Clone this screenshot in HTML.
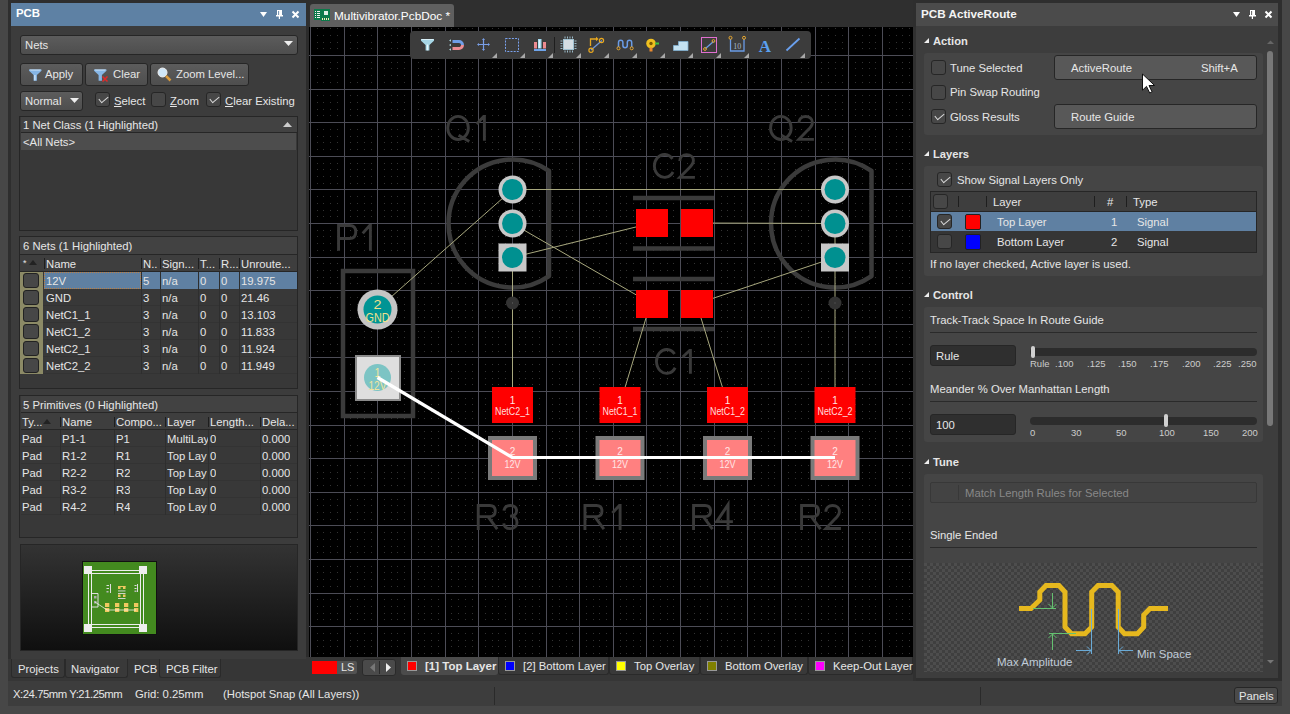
<!DOCTYPE html>
<html><head><meta charset="utf-8"><style>
*{margin:0;padding:0;box-sizing:border-box}
body{width:1290px;height:714px;overflow:hidden;background:#2e2e2e;font-family:"Liberation Sans",sans-serif;font-size:11.3px;color:#e6e6e6;position:relative}
.a{position:absolute;white-space:nowrap}
.btn{position:absolute;background:linear-gradient(#5c5c5c,#4e4e4e);border:1px solid #262626;border-radius:3px}
.cb{position:absolute;width:15px;height:15px;background:#474747;border:1px solid #262626;border-radius:3px}
.cb.on::after{content:"";position:absolute;left:3px;top:3px;width:8px;height:4px;border-left:1px solid #d8d8d8;border-bottom:1px solid #d8d8d8;transform:rotate(-40deg)}
.tbl{position:absolute;background:#383838;border:1px solid #262626}
.hdr{position:absolute;background:#414141;border-bottom:1px solid #262626}
.sep{position:absolute;width:1px;background:#222}
.row{position:absolute;left:0;right:0;height:17px;border-bottom:1px solid #333}
.tb{position:absolute;background:#3a3a3a;border:1px solid #262626;border-top:none}
</style></head><body>
<!-- outer frame -->
<div class="a" style="left:0;top:0;width:8px;height:714px;background:#474747"></div>
<div class="a" style="left:1282px;top:0;width:8px;height:714px;background:#474747"></div>
<div class="a" style="left:0;top:706px;width:1290px;height:8px;background:#474747"></div>

<!-- LEFT PANEL -->
<div class="a" style="left:11px;top:3px;width:295px;height:23px;background:#5e81a4"></div>
<div class="a" style="left:16px;top:6.5px;font-weight:bold;font-size:11.4px;color:#fff">PCB</div>
<svg class="a" style="left:255px;top:6px" width="50" height="16" viewBox="0 0 50 16">
 <path d="M5 6h7l-3.5 5z" fill="#fff"/>
 <path d="M22 4h5v5h1v1.5h-3v2.5h-1.2v-2.5h-2.8v-1.5h1zM23.2 5v4h0.9v-4z" fill="#fff" fill-rule="evenodd"/>
 <path d="M37.5 5.5l6 6M43.5 5.5l-6 6" stroke="#fff" stroke-width="2"/>
</svg>
<div class="a" style="left:8px;top:659px;width:908px;height:22px;background:#363636"></div>
<div class="a" style="left:11px;top:26px;width:295px;height:633px;background:#3c3c3c"></div>

<div class="btn" style="left:20px;top:35px;width:278px;height:20px"></div>
<div class="a" style="left:25px;top:39px">Nets</div>
<svg class="a" style="left:284px;top:41px" width="10" height="6"><path d="M0 0h9l-4.5 5z" fill="#eee"/></svg>

<div class="btn" style="left:20px;top:63px;width:63px;height:23px"></div>
<svg class="a" style="left:28px;top:68px" width="15" height="14"><path d="M1 1.5h12.5v1.3l-4.6 4.2v5.8h-3.3v-5.8l-4.6-4.2z" fill="#86b6e6"/><path d="M1.5 1.5h11.5l-1 1h-9.5z" fill="#cfe6fa"/><rect x="6.3" y="7" width="1.2" height="5.5" fill="#d8ecfb"/></svg>
<div class="a" style="left:45px;top:68px">Apply</div>
<div class="btn" style="left:85px;top:63px;width:63px;height:23px"></div>
<svg class="a" style="left:93px;top:68px" width="16" height="15"><path d="M1 1.5h12.5v1.3l-4.6 4.2v5.8h-3.3v-5.8l-4.6-4.2z" fill="#86b6e6"/><path d="M1.5 1.5h11.5l-1 1h-9.5z" fill="#cfe6fa"/><path d="M9.5 8.5l5 5M14.5 8.5l-5 5" stroke="#e02a2a" stroke-width="1.6"/></svg>
<div class="a" style="left:113px;top:68px">Clear</div>
<div class="btn" style="left:150px;top:63px;width:99px;height:23px"></div>
<svg class="a" style="left:157px;top:67px" width="15" height="15"><circle cx="5.5" cy="5.5" r="4.5" fill="#cfe6f7" stroke="#eee" stroke-width="1"/><path d="M9 9l4.5 4.5" stroke="#d89a3c" stroke-width="2.5"/></svg>
<div class="a" style="left:176px;top:68px">Zoom Level...</div>

<div class="btn" style="left:20px;top:91px;width:63px;height:20px"></div>
<div class="a" style="left:25px;top:95px">Normal</div>
<svg class="a" style="left:70px;top:98px" width="10" height="6"><path d="M0 0h9l-4.5 5z" fill="#eee"/></svg>
<div class="cb on" style="left:95px;top:92px"></div>
<div class="a" style="left:114px;top:95px"><u>S</u>elect</div>
<div class="cb" style="left:151px;top:92px"></div>
<div class="a" style="left:170px;top:95px"><u>Z</u>oom</div>
<div class="cb on" style="left:206px;top:92px"></div>
<div class="a" style="left:225px;top:95px"><u>C</u>lear Existing</div>

<!-- net class table -->
<div class="tbl" style="left:19px;top:116px;width:279px;height:115px"></div>
<div class="a" style="left:21px;top:117px;width:276px;height:16px;background:#424242;border-bottom:1px solid #262626"></div>
<div class="a" style="left:23px;top:119px">1 Net Class (1 Highlighted)</div>
<svg class="a" style="left:283px;top:122px" width="10" height="6"><path d="M0 5h9l-4.5-5z" fill="#ccc"/></svg>
<div class="a" style="left:21px;top:133px;width:275px;height:17px;background:#4d4d4d"></div>
<div class="a" style="left:23px;top:136px">&lt;All Nets&gt;</div>
<!-- nets table -->
<div class="tbl" style="left:19px;top:236px;width:279px;height:153px"></div>
<div class="a" style="left:20px;top:237px;width:277px;height:18px;background:#424242;border-bottom:1px solid #262626"></div>
<div class="a" style="left:23px;top:240px">6 Nets (1 Highlighted)</div>
<div class="a" style="left:20px;top:255px;width:277px;height:17px;background:#3e3e3e;border-bottom:1px solid #262626"></div>
<div class="sep" style="left:44px;top:258px;height:11px;background:#1e1e1e"></div>
<div class="sep" style="left:141px;top:258px;height:11px;background:#1e1e1e"></div>
<div class="sep" style="left:160px;top:258px;height:11px;background:#1e1e1e"></div>
<div class="sep" style="left:198px;top:258px;height:11px;background:#1e1e1e"></div>
<div class="sep" style="left:219px;top:258px;height:11px;background:#1e1e1e"></div>
<div class="sep" style="left:239px;top:258px;height:11px;background:#1e1e1e"></div>
<div class="a" style="left:23px;top:258px;font-size:9px">*</div>
<svg class="a" style="left:29px;top:260px" width="9" height="5"><path d="M0 5h8l-4-5z" fill="#222"/></svg>
<div class="a" style="left:46px;top:258px">Name</div>
<div class="a" style="left:143px;top:258px">N..</div>
<div class="a" style="left:162px;top:258px">Sign...</div>
<div class="a" style="left:200px;top:258px">T...</div>
<div class="a" style="left:221px;top:258px">R...</div>
<div class="a" style="left:241px;top:258px">Unroute...</div>
<div class="a" style="left:44px;top:272px;width:253px;height:17px;background:#5f80a2"></div>
<div class="a" style="left:44px;top:272px;width:97px;height:17px;border:1px dotted #c08040"></div>
<div class="a" style="left:20px;top:272px;width:23px;height:17px;background:#8c8a66"></div>
<div class="a" style="left:23px;top:273px;width:16px;height:15px;background:#474747;border:1px solid #222;border-radius:3px"></div>
<div class="a" style="left:46px;top:275px">12V</div>
<div class="a" style="left:143px;top:275px">5</div>
<div class="a" style="left:162px;top:275px">n/a</div>
<div class="a" style="left:200px;top:275px">0</div>
<div class="a" style="left:221px;top:275px">0</div>
<div class="a" style="left:241px;top:275px">19.975</div>
<div class="sep" style="left:141px;top:272px;height:17px;background:#2e2e2e"></div>
<div class="sep" style="left:160px;top:272px;height:17px;background:#2e2e2e"></div>
<div class="sep" style="left:198px;top:272px;height:17px;background:#2e2e2e"></div>
<div class="sep" style="left:219px;top:272px;height:17px;background:#2e2e2e"></div>
<div class="sep" style="left:239px;top:272px;height:17px;background:#2e2e2e"></div>
<div class="a" style="left:21px;top:305px;width:276px;height:1px;background:#333"></div>
<div class="a" style="left:20px;top:289px;width:23px;height:17px;background:#8c8a66"></div>
<div class="a" style="left:23px;top:290px;width:16px;height:15px;background:#474747;border:1px solid #222;border-radius:3px"></div>
<div class="a" style="left:46px;top:292px">GND</div>
<div class="a" style="left:143px;top:292px">3</div>
<div class="a" style="left:162px;top:292px">n/a</div>
<div class="a" style="left:200px;top:292px">0</div>
<div class="a" style="left:221px;top:292px">0</div>
<div class="a" style="left:241px;top:292px">21.46</div>
<div class="sep" style="left:141px;top:289px;height:17px;background:#2e2e2e"></div>
<div class="sep" style="left:160px;top:289px;height:17px;background:#2e2e2e"></div>
<div class="sep" style="left:198px;top:289px;height:17px;background:#2e2e2e"></div>
<div class="sep" style="left:219px;top:289px;height:17px;background:#2e2e2e"></div>
<div class="sep" style="left:239px;top:289px;height:17px;background:#2e2e2e"></div>
<div class="a" style="left:21px;top:322px;width:276px;height:1px;background:#333"></div>
<div class="a" style="left:20px;top:306px;width:23px;height:17px;background:#8c8a66"></div>
<div class="a" style="left:23px;top:307px;width:16px;height:15px;background:#474747;border:1px solid #222;border-radius:3px"></div>
<div class="a" style="left:46px;top:309px">NetC1_1</div>
<div class="a" style="left:143px;top:309px">3</div>
<div class="a" style="left:162px;top:309px">n/a</div>
<div class="a" style="left:200px;top:309px">0</div>
<div class="a" style="left:221px;top:309px">0</div>
<div class="a" style="left:241px;top:309px">13.103</div>
<div class="sep" style="left:141px;top:306px;height:17px;background:#2e2e2e"></div>
<div class="sep" style="left:160px;top:306px;height:17px;background:#2e2e2e"></div>
<div class="sep" style="left:198px;top:306px;height:17px;background:#2e2e2e"></div>
<div class="sep" style="left:219px;top:306px;height:17px;background:#2e2e2e"></div>
<div class="sep" style="left:239px;top:306px;height:17px;background:#2e2e2e"></div>
<div class="a" style="left:21px;top:339px;width:276px;height:1px;background:#333"></div>
<div class="a" style="left:20px;top:323px;width:23px;height:17px;background:#8c8a66"></div>
<div class="a" style="left:23px;top:324px;width:16px;height:15px;background:#474747;border:1px solid #222;border-radius:3px"></div>
<div class="a" style="left:46px;top:326px">NetC1_2</div>
<div class="a" style="left:143px;top:326px">3</div>
<div class="a" style="left:162px;top:326px">n/a</div>
<div class="a" style="left:200px;top:326px">0</div>
<div class="a" style="left:221px;top:326px">0</div>
<div class="a" style="left:241px;top:326px">11.833</div>
<div class="sep" style="left:141px;top:323px;height:17px;background:#2e2e2e"></div>
<div class="sep" style="left:160px;top:323px;height:17px;background:#2e2e2e"></div>
<div class="sep" style="left:198px;top:323px;height:17px;background:#2e2e2e"></div>
<div class="sep" style="left:219px;top:323px;height:17px;background:#2e2e2e"></div>
<div class="sep" style="left:239px;top:323px;height:17px;background:#2e2e2e"></div>
<div class="a" style="left:21px;top:356px;width:276px;height:1px;background:#333"></div>
<div class="a" style="left:20px;top:340px;width:23px;height:17px;background:#8c8a66"></div>
<div class="a" style="left:23px;top:341px;width:16px;height:15px;background:#474747;border:1px solid #222;border-radius:3px"></div>
<div class="a" style="left:46px;top:343px">NetC2_1</div>
<div class="a" style="left:143px;top:343px">3</div>
<div class="a" style="left:162px;top:343px">n/a</div>
<div class="a" style="left:200px;top:343px">0</div>
<div class="a" style="left:221px;top:343px">0</div>
<div class="a" style="left:241px;top:343px">11.924</div>
<div class="sep" style="left:141px;top:340px;height:17px;background:#2e2e2e"></div>
<div class="sep" style="left:160px;top:340px;height:17px;background:#2e2e2e"></div>
<div class="sep" style="left:198px;top:340px;height:17px;background:#2e2e2e"></div>
<div class="sep" style="left:219px;top:340px;height:17px;background:#2e2e2e"></div>
<div class="sep" style="left:239px;top:340px;height:17px;background:#2e2e2e"></div>
<div class="a" style="left:21px;top:373px;width:276px;height:1px;background:#333"></div>
<div class="a" style="left:20px;top:357px;width:23px;height:17px;background:#8c8a66"></div>
<div class="a" style="left:23px;top:358px;width:16px;height:15px;background:#474747;border:1px solid #222;border-radius:3px"></div>
<div class="a" style="left:46px;top:360px">NetC2_2</div>
<div class="a" style="left:143px;top:360px">3</div>
<div class="a" style="left:162px;top:360px">n/a</div>
<div class="a" style="left:200px;top:360px">0</div>
<div class="a" style="left:221px;top:360px">0</div>
<div class="a" style="left:241px;top:360px">11.949</div>
<div class="sep" style="left:141px;top:357px;height:17px;background:#2e2e2e"></div>
<div class="sep" style="left:160px;top:357px;height:17px;background:#2e2e2e"></div>
<div class="sep" style="left:198px;top:357px;height:17px;background:#2e2e2e"></div>
<div class="sep" style="left:219px;top:357px;height:17px;background:#2e2e2e"></div>
<div class="sep" style="left:239px;top:357px;height:17px;background:#2e2e2e"></div>
<!-- primitives table -->
<div class="tbl" style="left:19px;top:395px;width:279px;height:143px"></div>
<div class="a" style="left:21px;top:396px;width:276px;height:17px;background:#424242;border-bottom:1px solid #262626"></div>
<div class="a" style="left:23px;top:399px">5 Primitives (0 Highlighted)</div>
<div class="a" style="left:21px;top:413px;width:276px;height:17px;background:#3e3e3e;border-bottom:1px solid #262626"></div>
<div class="a" style="left:22px;top:416px">Ty...</div>
<div class="sep" style="left:60px;top:417px;height:10px;background:#1e1e1e"></div>
<div class="a" style="left:62px;top:416px">Name</div>
<div class="sep" style="left:114px;top:417px;height:10px;background:#1e1e1e"></div>
<div class="a" style="left:116px;top:416px">Compo...</div>
<div class="sep" style="left:165px;top:417px;height:10px;background:#1e1e1e"></div>
<div class="a" style="left:167px;top:416px">Layer</div>
<div class="sep" style="left:208px;top:417px;height:10px;background:#1e1e1e"></div>
<div class="a" style="left:210px;top:416px">Length...</div>
<div class="sep" style="left:260px;top:417px;height:10px;background:#1e1e1e"></div>
<div class="a" style="left:262px;top:416px">Dela...</div>
<svg class="a" style="left:43px;top:419px" width="9" height="5"><path d="M0 5h8l-4-5z" fill="#222"/></svg>
<div class="a" style="left:21px;top:446px;width:276px;height:1px;background:#333"></div>
<div class="a" style="left:22px;top:433px;overflow:hidden;max-width:60px">Pad</div>
<div class="a" style="left:62px;top:433px;overflow:hidden;max-width:60px">P1-1</div>
<div class="a" style="left:116px;top:433px;overflow:hidden;max-width:60px">P1</div>
<div class="a" style="left:167px;top:433px;overflow:hidden;max-width:45px">MultiLay</div>
<div class="a" style="left:210px;top:433px;overflow:hidden;max-width:60px">0</div>
<div class="a" style="left:262px;top:433px;overflow:hidden;max-width:60px">0.000</div>
<div class="sep" style="left:60px;top:430px;height:17px;background:#2e2e2e"></div>
<div class="sep" style="left:114px;top:430px;height:17px;background:#2e2e2e"></div>
<div class="sep" style="left:165px;top:430px;height:17px;background:#2e2e2e"></div>
<div class="sep" style="left:208px;top:430px;height:17px;background:#2e2e2e"></div>
<div class="sep" style="left:260px;top:430px;height:17px;background:#2e2e2e"></div>
<div class="a" style="left:21px;top:463px;width:276px;height:1px;background:#333"></div>
<div class="a" style="left:22px;top:450px;overflow:hidden;max-width:60px">Pad</div>
<div class="a" style="left:62px;top:450px;overflow:hidden;max-width:60px">R1-2</div>
<div class="a" style="left:116px;top:450px;overflow:hidden;max-width:60px">R1</div>
<div class="a" style="left:167px;top:450px;overflow:hidden;max-width:45px">Top Lay</div>
<div class="a" style="left:210px;top:450px;overflow:hidden;max-width:60px">0</div>
<div class="a" style="left:262px;top:450px;overflow:hidden;max-width:60px">0.000</div>
<div class="sep" style="left:60px;top:447px;height:17px;background:#2e2e2e"></div>
<div class="sep" style="left:114px;top:447px;height:17px;background:#2e2e2e"></div>
<div class="sep" style="left:165px;top:447px;height:17px;background:#2e2e2e"></div>
<div class="sep" style="left:208px;top:447px;height:17px;background:#2e2e2e"></div>
<div class="sep" style="left:260px;top:447px;height:17px;background:#2e2e2e"></div>
<div class="a" style="left:21px;top:480px;width:276px;height:1px;background:#333"></div>
<div class="a" style="left:22px;top:467px;overflow:hidden;max-width:60px">Pad</div>
<div class="a" style="left:62px;top:467px;overflow:hidden;max-width:60px">R2-2</div>
<div class="a" style="left:116px;top:467px;overflow:hidden;max-width:60px">R2</div>
<div class="a" style="left:167px;top:467px;overflow:hidden;max-width:45px">Top Lay</div>
<div class="a" style="left:210px;top:467px;overflow:hidden;max-width:60px">0</div>
<div class="a" style="left:262px;top:467px;overflow:hidden;max-width:60px">0.000</div>
<div class="sep" style="left:60px;top:464px;height:17px;background:#2e2e2e"></div>
<div class="sep" style="left:114px;top:464px;height:17px;background:#2e2e2e"></div>
<div class="sep" style="left:165px;top:464px;height:17px;background:#2e2e2e"></div>
<div class="sep" style="left:208px;top:464px;height:17px;background:#2e2e2e"></div>
<div class="sep" style="left:260px;top:464px;height:17px;background:#2e2e2e"></div>
<div class="a" style="left:21px;top:497px;width:276px;height:1px;background:#333"></div>
<div class="a" style="left:22px;top:484px;overflow:hidden;max-width:60px">Pad</div>
<div class="a" style="left:62px;top:484px;overflow:hidden;max-width:60px">R3-2</div>
<div class="a" style="left:116px;top:484px;overflow:hidden;max-width:60px">R3</div>
<div class="a" style="left:167px;top:484px;overflow:hidden;max-width:45px">Top Lay</div>
<div class="a" style="left:210px;top:484px;overflow:hidden;max-width:60px">0</div>
<div class="a" style="left:262px;top:484px;overflow:hidden;max-width:60px">0.000</div>
<div class="sep" style="left:60px;top:481px;height:17px;background:#2e2e2e"></div>
<div class="sep" style="left:114px;top:481px;height:17px;background:#2e2e2e"></div>
<div class="sep" style="left:165px;top:481px;height:17px;background:#2e2e2e"></div>
<div class="sep" style="left:208px;top:481px;height:17px;background:#2e2e2e"></div>
<div class="sep" style="left:260px;top:481px;height:17px;background:#2e2e2e"></div>
<div class="a" style="left:21px;top:514px;width:276px;height:1px;background:#333"></div>
<div class="a" style="left:22px;top:501px;overflow:hidden;max-width:60px">Pad</div>
<div class="a" style="left:62px;top:501px;overflow:hidden;max-width:60px">R4-2</div>
<div class="a" style="left:116px;top:501px;overflow:hidden;max-width:60px">R4</div>
<div class="a" style="left:167px;top:501px;overflow:hidden;max-width:45px">Top Lay</div>
<div class="a" style="left:210px;top:501px;overflow:hidden;max-width:60px">0</div>
<div class="a" style="left:262px;top:501px;overflow:hidden;max-width:60px">0.000</div>
<div class="sep" style="left:60px;top:498px;height:17px;background:#2e2e2e"></div>
<div class="sep" style="left:114px;top:498px;height:17px;background:#2e2e2e"></div>
<div class="sep" style="left:165px;top:498px;height:17px;background:#2e2e2e"></div>
<div class="sep" style="left:208px;top:498px;height:17px;background:#2e2e2e"></div>
<div class="sep" style="left:260px;top:498px;height:17px;background:#2e2e2e"></div>
<!-- navigator box -->
<div class="a" style="left:20px;top:544px;width:278px;height:107px;background:linear-gradient(#333,#0f0f0f);border:1px solid #262626"></div>
<svg class="a" style="left:82px;top:561px" width="75" height="74" viewBox="82 561 75 74">
 <rect x="82" y="561" width="75" height="74" fill="#111"/>
 <rect x="83" y="562" width="73" height="72" fill="#438a1f"/>
 <g fill="none" stroke="#eee" stroke-width="1">
  <path d="M92 570.5H139M92 573.5H139M92 624.5H139M92 627.5H139M88.5 574V624M91.5 574V624M140.5 574V624M143.5 574V624"/>
  <path d="M92 593.5h6v13.5h-6" stroke="#ddd"/>
 </g>
 <g fill="#eee"><rect x="84" y="566" width="8" height="8"/><rect x="139" y="566" width="8" height="8"/><rect x="84" y="624" width="8" height="8"/><rect x="139" y="624" width="8" height="8"/></g>
 <g fill="#aaa"><rect x="94" y="596" width="2.5" height="2.5"/><rect x="94" y="601" width="2.5" height="2.5"/></g>
 <g fill="#ddd"><rect x="110" y="584" width="1" height="9"/><rect x="106.5" y="585" width="2.5" height="1"/><rect x="106.5" y="588" width="2.5" height="1"/><rect x="106.5" y="591" width="2" height="1.5" fill="#bbb"/>
 <rect x="137" y="584" width="1" height="8"/><rect x="134.5" y="585" width="2" height="1"/><rect x="134.5" y="588" width="2" height="1"/><rect x="134.5" y="590.5" width="2" height="1.5" fill="#bbb"/>
 <rect x="118" y="590.5" width="7.5" height="0.9"/><rect x="118" y="593" width="7.5" height="0.9"/><rect x="118" y="598" width="7.5" height="0.9"/></g>
 <g fill="#f0c860"><rect x="118" y="586" width="7.5" height="1"/><rect x="118" y="586" width="2.5" height="3"/><rect x="123" y="586" width="2.5" height="3"/><rect x="118" y="594.5" width="2.5" height="2.5"/><rect x="123" y="594.5" width="2.5" height="2.5"/>
 <rect x="105" y="603" width="4.3" height="4"/><rect x="115" y="603" width="4.3" height="4"/><rect x="124" y="603" width="4.3" height="4"/><rect x="134" y="603" width="4.3" height="4"/>
 <rect x="105" y="608" width="4.3" height="4"/><rect x="115" y="608" width="4.3" height="4"/><rect x="124" y="608" width="4.3" height="4"/><rect x="134" y="608" width="4.3" height="4"/></g>
 <path d="M95 602L107 610H136" stroke="#fff" stroke-width="0.7" fill="none"/>
</svg>

<!-- panel tabs -->
<div class="a" style="left:11px;top:659px;width:54px;height:19px;background:#393939;border:1px solid #2a2a2a;border-top:none;border-radius:0 0 3px 3px"></div>
<div class="a" style="left:18px;top:663px">Projects</div>
<div class="a" style="left:65px;top:659px;width:63px;height:19px;background:#393939;border:1px solid #2a2a2a;border-top:none;border-radius:0 0 3px 3px"></div>
<div class="a" style="left:71px;top:663px">Navigator</div>
<div class="a" style="left:134px;top:663px">PCB</div>
<div class="a" style="left:159px;top:659px;width:62px;height:19px;background:#393939;border:1px solid #2a2a2a;border-top:none;border-radius:0 0 3px 3px"></div>
<div class="a" style="left:166px;top:663px">PCB Filter</div>

<!-- status bar -->
<div class="a" style="left:8px;top:681px;width:1274px;height:25px;background:#3d3d3d"></div>
<div class="a" style="left:13px;top:688px;letter-spacing:-0.45px">X:24.75mm Y:21.25mm</div>
<div class="a" style="left:135px;top:688px">Grid: 0.25mm</div>
<div class="a" style="left:223px;top:688px">(Hotspot Snap (All Layers))</div>
<div class="a" style="left:494px;top:687px;width:1px;height:18px;background:#2a2a2a"></div>
<div class="a" style="left:980px;top:687px;width:1px;height:18px;background:#2a2a2a"></div>
<div class="btn" style="left:1234px;top:687px;width:44px;height:17px;background:#4a4a4a"></div>
<div class="a" style="left:1239px;top:690px">Panels</div>

<!-- doc tab -->
<div class="a" style="left:309px;top:0;width:604px;height:27px;background:#2f2f2f"></div>
<div class="a" style="left:310px;top:4px;width:144px;height:23px;background:#5f5f5f;border-radius:3px 3px 0 0"></div>
<svg class="a" style="left:314px;top:9px" width="16" height="13"><rect width="16" height="11" fill="#0b7a4a"/><rect x="7" y="8" width="9" height="4" fill="#0b7a4a"/><g fill="#f2f2f2"><rect x="1" y="2" width="1" height="1"/><rect x="1" y="4" width="1" height="1"/><rect x="1" y="6" width="1" height="1"/><rect x="1" y="8" width="1" height="1"/><rect x="3" y="2" width="3" height="1"/><rect x="3" y="4" width="3" height="1"/><rect x="3" y="6" width="3" height="1"/><rect x="3" y="8" width="3" height="1"/></g><rect x="10" y="2" width="4" height="4" fill="#dfeee4"/><g fill="#f4f0b8"><rect x="8" y="9" width="1" height="2"/><rect x="10" y="9" width="1" height="2"/><rect x="12" y="9" width="1" height="2"/><rect x="14" y="9" width="1" height="2"/></g></svg>
<div class="a" style="left:334px;top:9px;font-size:11.8px;color:#fff">Multivibrator.PcbDoc *</div>
<!-- PCB canvas -->
<div class="a" style="left:306px;top:27px;width:3px;height:630px;background:#2b2b2b"></div>
<div class="a" style="left:913px;top:27px;width:3px;height:654px;background:#303030"></div>
<svg class="a" style="left:309px;top:27px;font-family:'Liberation Sans',sans-serif" width="604" height="630" viewBox="309 27 604 630">
<rect x="309" y="27" width="604" height="630" fill="#000"/>
<path d="M317 28h1m5 0h1m6 0h1m6 0h1m12 0h1m6 0h1m6 0h1m6 0h1m12 0h1m6 0h1m5 0h1m6 0h1m13 0h1m5 0h1m6 0h1m6 0h1m12 0h1m6 0h1m6 0h1m6 0h1m12 0h1m6 0h1m5 0h1m6 0h1m13 0h1m5 0h1m6 0h1m6 0h1m12 0h1m6 0h1m6 0h1m5 0h1m13 0h1m6 0h1m5 0h1m6 0h1m13 0h1m5 0h1m6 0h1m6 0h1m12 0h1m6 0h1m6 0h1m5 0h1m13 0h1m6 0h1m5 0h1m6 0h1m13 0h1m5 0h1m6 0h1m6 0h1m12 0h1m6 0h1m6 0h1m5 0h1m13 0h1m6 0h1m5 0h1m6 0h1m12 0h1m6 0h1m6 0h1m6 0h1m12 0h1m6 0h1m6 0h1m5 0h1m13 0h1m6 0h1m5 0h1m6 0h1M317 35h1m5 0h1m6 0h1m6 0h1m12 0h1m6 0h1m6 0h1m6 0h1m12 0h1m6 0h1m5 0h1m6 0h1m13 0h1m5 0h1m6 0h1m6 0h1m12 0h1m6 0h1m6 0h1m6 0h1m12 0h1m6 0h1m5 0h1m6 0h1m13 0h1m5 0h1m6 0h1m6 0h1m12 0h1m6 0h1m6 0h1m5 0h1m13 0h1m6 0h1m5 0h1m6 0h1m13 0h1m5 0h1m6 0h1m6 0h1m12 0h1m6 0h1m6 0h1m5 0h1m13 0h1m6 0h1m5 0h1m6 0h1m13 0h1m5 0h1m6 0h1m6 0h1m12 0h1m6 0h1m6 0h1m5 0h1m13 0h1m6 0h1m5 0h1m6 0h1m12 0h1m6 0h1m6 0h1m6 0h1m12 0h1m6 0h1m6 0h1m5 0h1m13 0h1m6 0h1m5 0h1m6 0h1M317 42h1m5 0h1m6 0h1m6 0h1m12 0h1m6 0h1m6 0h1m6 0h1m12 0h1m6 0h1m5 0h1m6 0h1m13 0h1m5 0h1m6 0h1m6 0h1m12 0h1m6 0h1m6 0h1m6 0h1m12 0h1m6 0h1m5 0h1m6 0h1m13 0h1m5 0h1m6 0h1m6 0h1m12 0h1m6 0h1m6 0h1m5 0h1m13 0h1m6 0h1m5 0h1m6 0h1m13 0h1m5 0h1m6 0h1m6 0h1m12 0h1m6 0h1m6 0h1m5 0h1m13 0h1m6 0h1m5 0h1m6 0h1m13 0h1m5 0h1m6 0h1m6 0h1m12 0h1m6 0h1m6 0h1m5 0h1m13 0h1m6 0h1m5 0h1m6 0h1m12 0h1m6 0h1m6 0h1m6 0h1m12 0h1m6 0h1m6 0h1m5 0h1m13 0h1m6 0h1m5 0h1m6 0h1M317 48h1m5 0h1m6 0h1m6 0h1m12 0h1m6 0h1m6 0h1m6 0h1m12 0h1m6 0h1m5 0h1m6 0h1m13 0h1m5 0h1m6 0h1m6 0h1m12 0h1m6 0h1m6 0h1m6 0h1m12 0h1m6 0h1m5 0h1m6 0h1m13 0h1m5 0h1m6 0h1m6 0h1m12 0h1m6 0h1m6 0h1m5 0h1m13 0h1m6 0h1m5 0h1m6 0h1m13 0h1m5 0h1m6 0h1m6 0h1m12 0h1m6 0h1m6 0h1m5 0h1m13 0h1m6 0h1m5 0h1m6 0h1m13 0h1m5 0h1m6 0h1m6 0h1m12 0h1m6 0h1m6 0h1m5 0h1m13 0h1m6 0h1m5 0h1m6 0h1m12 0h1m6 0h1m6 0h1m6 0h1m12 0h1m6 0h1m6 0h1m5 0h1m13 0h1m6 0h1m5 0h1m6 0h1M317 62h1m5 0h1m6 0h1m6 0h1m12 0h1m6 0h1m6 0h1m6 0h1m12 0h1m6 0h1m5 0h1m6 0h1m13 0h1m5 0h1m6 0h1m6 0h1m12 0h1m6 0h1m6 0h1m6 0h1m12 0h1m6 0h1m5 0h1m6 0h1m13 0h1m5 0h1m6 0h1m6 0h1m12 0h1m6 0h1m6 0h1m5 0h1m13 0h1m6 0h1m5 0h1m6 0h1m13 0h1m5 0h1m6 0h1m6 0h1m12 0h1m6 0h1m6 0h1m5 0h1m13 0h1m6 0h1m5 0h1m6 0h1m13 0h1m5 0h1m6 0h1m6 0h1m12 0h1m6 0h1m6 0h1m5 0h1m13 0h1m6 0h1m5 0h1m6 0h1m12 0h1m6 0h1m6 0h1m6 0h1m12 0h1m6 0h1m6 0h1m5 0h1m13 0h1m6 0h1m5 0h1m6 0h1M317 68h1m5 0h1m6 0h1m6 0h1m12 0h1m6 0h1m6 0h1m6 0h1m12 0h1m6 0h1m5 0h1m6 0h1m13 0h1m5 0h1m6 0h1m6 0h1m12 0h1m6 0h1m6 0h1m6 0h1m12 0h1m6 0h1m5 0h1m6 0h1m13 0h1m5 0h1m6 0h1m6 0h1m12 0h1m6 0h1m6 0h1m5 0h1m13 0h1m6 0h1m5 0h1m6 0h1m13 0h1m5 0h1m6 0h1m6 0h1m12 0h1m6 0h1m6 0h1m5 0h1m13 0h1m6 0h1m5 0h1m6 0h1m13 0h1m5 0h1m6 0h1m6 0h1m12 0h1m6 0h1m6 0h1m5 0h1m13 0h1m6 0h1m5 0h1m6 0h1m12 0h1m6 0h1m6 0h1m6 0h1m12 0h1m6 0h1m6 0h1m5 0h1m13 0h1m6 0h1m5 0h1m6 0h1M317 75h1m5 0h1m6 0h1m6 0h1m12 0h1m6 0h1m6 0h1m6 0h1m12 0h1m6 0h1m5 0h1m6 0h1m13 0h1m5 0h1m6 0h1m6 0h1m12 0h1m6 0h1m6 0h1m6 0h1m12 0h1m6 0h1m5 0h1m6 0h1m13 0h1m5 0h1m6 0h1m6 0h1m12 0h1m6 0h1m6 0h1m5 0h1m13 0h1m6 0h1m5 0h1m6 0h1m13 0h1m5 0h1m6 0h1m6 0h1m12 0h1m6 0h1m6 0h1m5 0h1m13 0h1m6 0h1m5 0h1m6 0h1m13 0h1m5 0h1m6 0h1m6 0h1m12 0h1m6 0h1m6 0h1m5 0h1m13 0h1m6 0h1m5 0h1m6 0h1m12 0h1m6 0h1m6 0h1m6 0h1m12 0h1m6 0h1m6 0h1m5 0h1m13 0h1m6 0h1m5 0h1m6 0h1M317 82h1m5 0h1m6 0h1m6 0h1m12 0h1m6 0h1m6 0h1m6 0h1m12 0h1m6 0h1m5 0h1m6 0h1m13 0h1m5 0h1m6 0h1m6 0h1m12 0h1m6 0h1m6 0h1m6 0h1m12 0h1m6 0h1m5 0h1m6 0h1m13 0h1m5 0h1m6 0h1m6 0h1m12 0h1m6 0h1m6 0h1m5 0h1m13 0h1m6 0h1m5 0h1m6 0h1m13 0h1m5 0h1m6 0h1m6 0h1m12 0h1m6 0h1m6 0h1m5 0h1m13 0h1m6 0h1m5 0h1m6 0h1m13 0h1m5 0h1m6 0h1m6 0h1m12 0h1m6 0h1m6 0h1m5 0h1m13 0h1m6 0h1m5 0h1m6 0h1m12 0h1m6 0h1m6 0h1m6 0h1m12 0h1m6 0h1m6 0h1m5 0h1m13 0h1m6 0h1m5 0h1m6 0h1M317 95h1m5 0h1m6 0h1m6 0h1m12 0h1m6 0h1m6 0h1m6 0h1m12 0h1m6 0h1m5 0h1m6 0h1m13 0h1m5 0h1m6 0h1m6 0h1m12 0h1m6 0h1m6 0h1m6 0h1m12 0h1m6 0h1m5 0h1m6 0h1m13 0h1m5 0h1m6 0h1m6 0h1m12 0h1m6 0h1m6 0h1m5 0h1m13 0h1m6 0h1m5 0h1m6 0h1m13 0h1m5 0h1m6 0h1m6 0h1m12 0h1m6 0h1m6 0h1m5 0h1m13 0h1m6 0h1m5 0h1m6 0h1m13 0h1m5 0h1m6 0h1m6 0h1m12 0h1m6 0h1m6 0h1m5 0h1m13 0h1m6 0h1m5 0h1m6 0h1m12 0h1m6 0h1m6 0h1m6 0h1m12 0h1m6 0h1m6 0h1m5 0h1m13 0h1m6 0h1m5 0h1m6 0h1M317 102h1m5 0h1m6 0h1m6 0h1m12 0h1m6 0h1m6 0h1m6 0h1m12 0h1m6 0h1m5 0h1m6 0h1m13 0h1m5 0h1m6 0h1m6 0h1m12 0h1m6 0h1m6 0h1m6 0h1m12 0h1m6 0h1m5 0h1m6 0h1m13 0h1m5 0h1m6 0h1m6 0h1m12 0h1m6 0h1m6 0h1m5 0h1m13 0h1m6 0h1m5 0h1m6 0h1m13 0h1m5 0h1m6 0h1m6 0h1m12 0h1m6 0h1m6 0h1m5 0h1m13 0h1m6 0h1m5 0h1m6 0h1m13 0h1m5 0h1m6 0h1m6 0h1m12 0h1m6 0h1m6 0h1m5 0h1m13 0h1m6 0h1m5 0h1m6 0h1m12 0h1m6 0h1m6 0h1m6 0h1m12 0h1m6 0h1m6 0h1m5 0h1m13 0h1m6 0h1m5 0h1m6 0h1M317 109h1m5 0h1m6 0h1m6 0h1m12 0h1m6 0h1m6 0h1m6 0h1m12 0h1m6 0h1m5 0h1m6 0h1m13 0h1m5 0h1m6 0h1m6 0h1m12 0h1m6 0h1m6 0h1m6 0h1m12 0h1m6 0h1m5 0h1m6 0h1m13 0h1m5 0h1m6 0h1m6 0h1m12 0h1m6 0h1m6 0h1m5 0h1m13 0h1m6 0h1m5 0h1m6 0h1m13 0h1m5 0h1m6 0h1m6 0h1m12 0h1m6 0h1m6 0h1m5 0h1m13 0h1m6 0h1m5 0h1m6 0h1m13 0h1m5 0h1m6 0h1m6 0h1m12 0h1m6 0h1m6 0h1m5 0h1m13 0h1m6 0h1m5 0h1m6 0h1m12 0h1m6 0h1m6 0h1m6 0h1m12 0h1m6 0h1m6 0h1m5 0h1m13 0h1m6 0h1m5 0h1m6 0h1M317 115h1m5 0h1m6 0h1m6 0h1m12 0h1m6 0h1m6 0h1m6 0h1m12 0h1m6 0h1m5 0h1m6 0h1m13 0h1m5 0h1m6 0h1m6 0h1m12 0h1m6 0h1m6 0h1m6 0h1m12 0h1m6 0h1m5 0h1m6 0h1m13 0h1m5 0h1m6 0h1m6 0h1m12 0h1m6 0h1m6 0h1m5 0h1m13 0h1m6 0h1m5 0h1m6 0h1m13 0h1m5 0h1m6 0h1m6 0h1m12 0h1m6 0h1m6 0h1m5 0h1m13 0h1m6 0h1m5 0h1m6 0h1m13 0h1m5 0h1m6 0h1m6 0h1m12 0h1m6 0h1m6 0h1m5 0h1m13 0h1m6 0h1m5 0h1m6 0h1m12 0h1m6 0h1m6 0h1m6 0h1m12 0h1m6 0h1m6 0h1m5 0h1m13 0h1m6 0h1m5 0h1m6 0h1M317 129h1m5 0h1m6 0h1m6 0h1m12 0h1m6 0h1m6 0h1m6 0h1m12 0h1m6 0h1m5 0h1m6 0h1m13 0h1m5 0h1m6 0h1m6 0h1m12 0h1m6 0h1m6 0h1m6 0h1m12 0h1m6 0h1m5 0h1m6 0h1m13 0h1m5 0h1m6 0h1m6 0h1m12 0h1m6 0h1m6 0h1m5 0h1m13 0h1m6 0h1m5 0h1m6 0h1m13 0h1m5 0h1m6 0h1m6 0h1m12 0h1m6 0h1m6 0h1m5 0h1m13 0h1m6 0h1m5 0h1m6 0h1m13 0h1m5 0h1m6 0h1m6 0h1m12 0h1m6 0h1m6 0h1m5 0h1m13 0h1m6 0h1m5 0h1m6 0h1m12 0h1m6 0h1m6 0h1m6 0h1m12 0h1m6 0h1m6 0h1m5 0h1m13 0h1m6 0h1m5 0h1m6 0h1M317 136h1m5 0h1m6 0h1m6 0h1m12 0h1m6 0h1m6 0h1m6 0h1m12 0h1m6 0h1m5 0h1m6 0h1m13 0h1m5 0h1m6 0h1m6 0h1m12 0h1m6 0h1m6 0h1m6 0h1m12 0h1m6 0h1m5 0h1m6 0h1m13 0h1m5 0h1m6 0h1m6 0h1m12 0h1m6 0h1m6 0h1m5 0h1m13 0h1m6 0h1m5 0h1m6 0h1m13 0h1m5 0h1m6 0h1m6 0h1m12 0h1m6 0h1m6 0h1m5 0h1m13 0h1m6 0h1m5 0h1m6 0h1m13 0h1m5 0h1m6 0h1m6 0h1m12 0h1m6 0h1m6 0h1m5 0h1m13 0h1m6 0h1m5 0h1m6 0h1m12 0h1m6 0h1m6 0h1m6 0h1m12 0h1m6 0h1m6 0h1m5 0h1m13 0h1m6 0h1m5 0h1m6 0h1M317 142h1m5 0h1m6 0h1m6 0h1m12 0h1m6 0h1m6 0h1m6 0h1m12 0h1m6 0h1m5 0h1m6 0h1m13 0h1m5 0h1m6 0h1m6 0h1m12 0h1m6 0h1m6 0h1m6 0h1m12 0h1m6 0h1m5 0h1m6 0h1m13 0h1m5 0h1m6 0h1m6 0h1m12 0h1m6 0h1m6 0h1m5 0h1m13 0h1m6 0h1m5 0h1m6 0h1m13 0h1m5 0h1m6 0h1m6 0h1m12 0h1m6 0h1m6 0h1m5 0h1m13 0h1m6 0h1m5 0h1m6 0h1m13 0h1m5 0h1m6 0h1m6 0h1m12 0h1m6 0h1m6 0h1m5 0h1m13 0h1m6 0h1m5 0h1m6 0h1m12 0h1m6 0h1m6 0h1m6 0h1m12 0h1m6 0h1m6 0h1m5 0h1m13 0h1m6 0h1m5 0h1m6 0h1M317 149h1m5 0h1m6 0h1m6 0h1m12 0h1m6 0h1m6 0h1m6 0h1m12 0h1m6 0h1m5 0h1m6 0h1m13 0h1m5 0h1m6 0h1m6 0h1m12 0h1m6 0h1m6 0h1m6 0h1m12 0h1m6 0h1m5 0h1m6 0h1m13 0h1m5 0h1m6 0h1m6 0h1m12 0h1m6 0h1m6 0h1m5 0h1m13 0h1m6 0h1m5 0h1m6 0h1m13 0h1m5 0h1m6 0h1m6 0h1m12 0h1m6 0h1m6 0h1m5 0h1m13 0h1m6 0h1m5 0h1m6 0h1m13 0h1m5 0h1m6 0h1m6 0h1m12 0h1m6 0h1m6 0h1m5 0h1m13 0h1m6 0h1m5 0h1m6 0h1m12 0h1m6 0h1m6 0h1m6 0h1m12 0h1m6 0h1m6 0h1m5 0h1m13 0h1m6 0h1m5 0h1m6 0h1M317 163h1m5 0h1m6 0h1m6 0h1m12 0h1m6 0h1m6 0h1m6 0h1m12 0h1m6 0h1m5 0h1m6 0h1m13 0h1m5 0h1m6 0h1m6 0h1m12 0h1m6 0h1m6 0h1m6 0h1m12 0h1m6 0h1m5 0h1m6 0h1m13 0h1m5 0h1m6 0h1m6 0h1m12 0h1m6 0h1m6 0h1m5 0h1m13 0h1m6 0h1m5 0h1m6 0h1m13 0h1m5 0h1m6 0h1m6 0h1m12 0h1m6 0h1m6 0h1m5 0h1m13 0h1m6 0h1m5 0h1m6 0h1m13 0h1m5 0h1m6 0h1m6 0h1m12 0h1m6 0h1m6 0h1m5 0h1m13 0h1m6 0h1m5 0h1m6 0h1m12 0h1m6 0h1m6 0h1m6 0h1m12 0h1m6 0h1m6 0h1m5 0h1m13 0h1m6 0h1m5 0h1m6 0h1M317 169h1m5 0h1m6 0h1m6 0h1m12 0h1m6 0h1m6 0h1m6 0h1m12 0h1m6 0h1m5 0h1m6 0h1m13 0h1m5 0h1m6 0h1m6 0h1m12 0h1m6 0h1m6 0h1m6 0h1m12 0h1m6 0h1m5 0h1m6 0h1m13 0h1m5 0h1m6 0h1m6 0h1m12 0h1m6 0h1m6 0h1m5 0h1m13 0h1m6 0h1m5 0h1m6 0h1m13 0h1m5 0h1m6 0h1m6 0h1m12 0h1m6 0h1m6 0h1m5 0h1m13 0h1m6 0h1m5 0h1m6 0h1m13 0h1m5 0h1m6 0h1m6 0h1m12 0h1m6 0h1m6 0h1m5 0h1m13 0h1m6 0h1m5 0h1m6 0h1m12 0h1m6 0h1m6 0h1m6 0h1m12 0h1m6 0h1m6 0h1m5 0h1m13 0h1m6 0h1m5 0h1m6 0h1M317 176h1m5 0h1m6 0h1m6 0h1m12 0h1m6 0h1m6 0h1m6 0h1m12 0h1m6 0h1m5 0h1m6 0h1m13 0h1m5 0h1m6 0h1m6 0h1m12 0h1m6 0h1m6 0h1m6 0h1m12 0h1m6 0h1m5 0h1m6 0h1m13 0h1m5 0h1m6 0h1m6 0h1m12 0h1m6 0h1m6 0h1m5 0h1m13 0h1m6 0h1m5 0h1m6 0h1m13 0h1m5 0h1m6 0h1m6 0h1m12 0h1m6 0h1m6 0h1m5 0h1m13 0h1m6 0h1m5 0h1m6 0h1m13 0h1m5 0h1m6 0h1m6 0h1m12 0h1m6 0h1m6 0h1m5 0h1m13 0h1m6 0h1m5 0h1m6 0h1m12 0h1m6 0h1m6 0h1m6 0h1m12 0h1m6 0h1m6 0h1m5 0h1m13 0h1m6 0h1m5 0h1m6 0h1M317 183h1m5 0h1m6 0h1m6 0h1m12 0h1m6 0h1m6 0h1m6 0h1m12 0h1m6 0h1m5 0h1m6 0h1m13 0h1m5 0h1m6 0h1m6 0h1m12 0h1m6 0h1m6 0h1m6 0h1m12 0h1m6 0h1m5 0h1m6 0h1m13 0h1m5 0h1m6 0h1m6 0h1m12 0h1m6 0h1m6 0h1m5 0h1m13 0h1m6 0h1m5 0h1m6 0h1m13 0h1m5 0h1m6 0h1m6 0h1m12 0h1m6 0h1m6 0h1m5 0h1m13 0h1m6 0h1m5 0h1m6 0h1m13 0h1m5 0h1m6 0h1m6 0h1m12 0h1m6 0h1m6 0h1m5 0h1m13 0h1m6 0h1m5 0h1m6 0h1m12 0h1m6 0h1m6 0h1m6 0h1m12 0h1m6 0h1m6 0h1m5 0h1m13 0h1m6 0h1m5 0h1m6 0h1M317 196h1m5 0h1m6 0h1m6 0h1m12 0h1m6 0h1m6 0h1m6 0h1m12 0h1m6 0h1m5 0h1m6 0h1m13 0h1m5 0h1m6 0h1m6 0h1m12 0h1m6 0h1m6 0h1m6 0h1m12 0h1m6 0h1m5 0h1m6 0h1m13 0h1m5 0h1m6 0h1m6 0h1m12 0h1m6 0h1m6 0h1m5 0h1m13 0h1m6 0h1m5 0h1m6 0h1m13 0h1m5 0h1m6 0h1m6 0h1m12 0h1m6 0h1m6 0h1m5 0h1m13 0h1m6 0h1m5 0h1m6 0h1m13 0h1m5 0h1m6 0h1m6 0h1m12 0h1m6 0h1m6 0h1m5 0h1m13 0h1m6 0h1m5 0h1m6 0h1m12 0h1m6 0h1m6 0h1m6 0h1m12 0h1m6 0h1m6 0h1m5 0h1m13 0h1m6 0h1m5 0h1m6 0h1M317 203h1m5 0h1m6 0h1m6 0h1m12 0h1m6 0h1m6 0h1m6 0h1m12 0h1m6 0h1m5 0h1m6 0h1m13 0h1m5 0h1m6 0h1m6 0h1m12 0h1m6 0h1m6 0h1m6 0h1m12 0h1m6 0h1m5 0h1m6 0h1m13 0h1m5 0h1m6 0h1m6 0h1m12 0h1m6 0h1m6 0h1m5 0h1m13 0h1m6 0h1m5 0h1m6 0h1m13 0h1m5 0h1m6 0h1m6 0h1m12 0h1m6 0h1m6 0h1m5 0h1m13 0h1m6 0h1m5 0h1m6 0h1m13 0h1m5 0h1m6 0h1m6 0h1m12 0h1m6 0h1m6 0h1m5 0h1m13 0h1m6 0h1m5 0h1m6 0h1m12 0h1m6 0h1m6 0h1m6 0h1m12 0h1m6 0h1m6 0h1m5 0h1m13 0h1m6 0h1m5 0h1m6 0h1M317 210h1m5 0h1m6 0h1m6 0h1m12 0h1m6 0h1m6 0h1m6 0h1m12 0h1m6 0h1m5 0h1m6 0h1m13 0h1m5 0h1m6 0h1m6 0h1m12 0h1m6 0h1m6 0h1m6 0h1m12 0h1m6 0h1m5 0h1m6 0h1m13 0h1m5 0h1m6 0h1m6 0h1m12 0h1m6 0h1m6 0h1m5 0h1m13 0h1m6 0h1m5 0h1m6 0h1m13 0h1m5 0h1m6 0h1m6 0h1m12 0h1m6 0h1m6 0h1m5 0h1m13 0h1m6 0h1m5 0h1m6 0h1m13 0h1m5 0h1m6 0h1m6 0h1m12 0h1m6 0h1m6 0h1m5 0h1m13 0h1m6 0h1m5 0h1m6 0h1m12 0h1m6 0h1m6 0h1m6 0h1m12 0h1m6 0h1m6 0h1m5 0h1m13 0h1m6 0h1m5 0h1m6 0h1M317 216h1m5 0h1m6 0h1m6 0h1m12 0h1m6 0h1m6 0h1m6 0h1m12 0h1m6 0h1m5 0h1m6 0h1m13 0h1m5 0h1m6 0h1m6 0h1m12 0h1m6 0h1m6 0h1m6 0h1m12 0h1m6 0h1m5 0h1m6 0h1m13 0h1m5 0h1m6 0h1m6 0h1m12 0h1m6 0h1m6 0h1m5 0h1m13 0h1m6 0h1m5 0h1m6 0h1m13 0h1m5 0h1m6 0h1m6 0h1m12 0h1m6 0h1m6 0h1m5 0h1m13 0h1m6 0h1m5 0h1m6 0h1m13 0h1m5 0h1m6 0h1m6 0h1m12 0h1m6 0h1m6 0h1m5 0h1m13 0h1m6 0h1m5 0h1m6 0h1m12 0h1m6 0h1m6 0h1m6 0h1m12 0h1m6 0h1m6 0h1m5 0h1m13 0h1m6 0h1m5 0h1m6 0h1M317 230h1m5 0h1m6 0h1m6 0h1m12 0h1m6 0h1m6 0h1m6 0h1m12 0h1m6 0h1m5 0h1m6 0h1m13 0h1m5 0h1m6 0h1m6 0h1m12 0h1m6 0h1m6 0h1m6 0h1m12 0h1m6 0h1m5 0h1m6 0h1m13 0h1m5 0h1m6 0h1m6 0h1m12 0h1m6 0h1m6 0h1m5 0h1m13 0h1m6 0h1m5 0h1m6 0h1m13 0h1m5 0h1m6 0h1m6 0h1m12 0h1m6 0h1m6 0h1m5 0h1m13 0h1m6 0h1m5 0h1m6 0h1m13 0h1m5 0h1m6 0h1m6 0h1m12 0h1m6 0h1m6 0h1m5 0h1m13 0h1m6 0h1m5 0h1m6 0h1m12 0h1m6 0h1m6 0h1m6 0h1m12 0h1m6 0h1m6 0h1m5 0h1m13 0h1m6 0h1m5 0h1m6 0h1M317 236h1m5 0h1m6 0h1m6 0h1m12 0h1m6 0h1m6 0h1m6 0h1m12 0h1m6 0h1m5 0h1m6 0h1m13 0h1m5 0h1m6 0h1m6 0h1m12 0h1m6 0h1m6 0h1m6 0h1m12 0h1m6 0h1m5 0h1m6 0h1m13 0h1m5 0h1m6 0h1m6 0h1m12 0h1m6 0h1m6 0h1m5 0h1m13 0h1m6 0h1m5 0h1m6 0h1m13 0h1m5 0h1m6 0h1m6 0h1m12 0h1m6 0h1m6 0h1m5 0h1m13 0h1m6 0h1m5 0h1m6 0h1m13 0h1m5 0h1m6 0h1m6 0h1m12 0h1m6 0h1m6 0h1m5 0h1m13 0h1m6 0h1m5 0h1m6 0h1m12 0h1m6 0h1m6 0h1m6 0h1m12 0h1m6 0h1m6 0h1m5 0h1m13 0h1m6 0h1m5 0h1m6 0h1M317 243h1m5 0h1m6 0h1m6 0h1m12 0h1m6 0h1m6 0h1m6 0h1m12 0h1m6 0h1m5 0h1m6 0h1m13 0h1m5 0h1m6 0h1m6 0h1m12 0h1m6 0h1m6 0h1m6 0h1m12 0h1m6 0h1m5 0h1m6 0h1m13 0h1m5 0h1m6 0h1m6 0h1m12 0h1m6 0h1m6 0h1m5 0h1m13 0h1m6 0h1m5 0h1m6 0h1m13 0h1m5 0h1m6 0h1m6 0h1m12 0h1m6 0h1m6 0h1m5 0h1m13 0h1m6 0h1m5 0h1m6 0h1m13 0h1m5 0h1m6 0h1m6 0h1m12 0h1m6 0h1m6 0h1m5 0h1m13 0h1m6 0h1m5 0h1m6 0h1m12 0h1m6 0h1m6 0h1m6 0h1m12 0h1m6 0h1m6 0h1m5 0h1m13 0h1m6 0h1m5 0h1m6 0h1M317 250h1m5 0h1m6 0h1m6 0h1m12 0h1m6 0h1m6 0h1m6 0h1m12 0h1m6 0h1m5 0h1m6 0h1m13 0h1m5 0h1m6 0h1m6 0h1m12 0h1m6 0h1m6 0h1m6 0h1m12 0h1m6 0h1m5 0h1m6 0h1m13 0h1m5 0h1m6 0h1m6 0h1m12 0h1m6 0h1m6 0h1m5 0h1m13 0h1m6 0h1m5 0h1m6 0h1m13 0h1m5 0h1m6 0h1m6 0h1m12 0h1m6 0h1m6 0h1m5 0h1m13 0h1m6 0h1m5 0h1m6 0h1m13 0h1m5 0h1m6 0h1m6 0h1m12 0h1m6 0h1m6 0h1m5 0h1m13 0h1m6 0h1m5 0h1m6 0h1m12 0h1m6 0h1m6 0h1m6 0h1m12 0h1m6 0h1m6 0h1m5 0h1m13 0h1m6 0h1m5 0h1m6 0h1M317 263h1m5 0h1m6 0h1m6 0h1m12 0h1m6 0h1m6 0h1m6 0h1m12 0h1m6 0h1m5 0h1m6 0h1m13 0h1m5 0h1m6 0h1m6 0h1m12 0h1m6 0h1m6 0h1m6 0h1m12 0h1m6 0h1m5 0h1m6 0h1m13 0h1m5 0h1m6 0h1m6 0h1m12 0h1m6 0h1m6 0h1m5 0h1m13 0h1m6 0h1m5 0h1m6 0h1m13 0h1m5 0h1m6 0h1m6 0h1m12 0h1m6 0h1m6 0h1m5 0h1m13 0h1m6 0h1m5 0h1m6 0h1m13 0h1m5 0h1m6 0h1m6 0h1m12 0h1m6 0h1m6 0h1m5 0h1m13 0h1m6 0h1m5 0h1m6 0h1m12 0h1m6 0h1m6 0h1m6 0h1m12 0h1m6 0h1m6 0h1m5 0h1m13 0h1m6 0h1m5 0h1m6 0h1M317 270h1m5 0h1m6 0h1m6 0h1m12 0h1m6 0h1m6 0h1m6 0h1m12 0h1m6 0h1m5 0h1m6 0h1m13 0h1m5 0h1m6 0h1m6 0h1m12 0h1m6 0h1m6 0h1m6 0h1m12 0h1m6 0h1m5 0h1m6 0h1m13 0h1m5 0h1m6 0h1m6 0h1m12 0h1m6 0h1m6 0h1m5 0h1m13 0h1m6 0h1m5 0h1m6 0h1m13 0h1m5 0h1m6 0h1m6 0h1m12 0h1m6 0h1m6 0h1m5 0h1m13 0h1m6 0h1m5 0h1m6 0h1m13 0h1m5 0h1m6 0h1m6 0h1m12 0h1m6 0h1m6 0h1m5 0h1m13 0h1m6 0h1m5 0h1m6 0h1m12 0h1m6 0h1m6 0h1m6 0h1m12 0h1m6 0h1m6 0h1m5 0h1m13 0h1m6 0h1m5 0h1m6 0h1M317 277h1m5 0h1m6 0h1m6 0h1m12 0h1m6 0h1m6 0h1m6 0h1m12 0h1m6 0h1m5 0h1m6 0h1m13 0h1m5 0h1m6 0h1m6 0h1m12 0h1m6 0h1m6 0h1m6 0h1m12 0h1m6 0h1m5 0h1m6 0h1m13 0h1m5 0h1m6 0h1m6 0h1m12 0h1m6 0h1m6 0h1m5 0h1m13 0h1m6 0h1m5 0h1m6 0h1m13 0h1m5 0h1m6 0h1m6 0h1m12 0h1m6 0h1m6 0h1m5 0h1m13 0h1m6 0h1m5 0h1m6 0h1m13 0h1m5 0h1m6 0h1m6 0h1m12 0h1m6 0h1m6 0h1m5 0h1m13 0h1m6 0h1m5 0h1m6 0h1m12 0h1m6 0h1m6 0h1m6 0h1m12 0h1m6 0h1m6 0h1m5 0h1m13 0h1m6 0h1m5 0h1m6 0h1M317 283h1m5 0h1m6 0h1m6 0h1m12 0h1m6 0h1m6 0h1m6 0h1m12 0h1m6 0h1m5 0h1m6 0h1m13 0h1m5 0h1m6 0h1m6 0h1m12 0h1m6 0h1m6 0h1m6 0h1m12 0h1m6 0h1m5 0h1m6 0h1m13 0h1m5 0h1m6 0h1m6 0h1m12 0h1m6 0h1m6 0h1m5 0h1m13 0h1m6 0h1m5 0h1m6 0h1m13 0h1m5 0h1m6 0h1m6 0h1m12 0h1m6 0h1m6 0h1m5 0h1m13 0h1m6 0h1m5 0h1m6 0h1m13 0h1m5 0h1m6 0h1m6 0h1m12 0h1m6 0h1m6 0h1m5 0h1m13 0h1m6 0h1m5 0h1m6 0h1m12 0h1m6 0h1m6 0h1m6 0h1m12 0h1m6 0h1m6 0h1m5 0h1m13 0h1m6 0h1m5 0h1m6 0h1M317 297h1m5 0h1m6 0h1m6 0h1m12 0h1m6 0h1m6 0h1m6 0h1m12 0h1m6 0h1m5 0h1m6 0h1m13 0h1m5 0h1m6 0h1m6 0h1m12 0h1m6 0h1m6 0h1m6 0h1m12 0h1m6 0h1m5 0h1m6 0h1m13 0h1m5 0h1m6 0h1m6 0h1m12 0h1m6 0h1m6 0h1m5 0h1m13 0h1m6 0h1m5 0h1m6 0h1m13 0h1m5 0h1m6 0h1m6 0h1m12 0h1m6 0h1m6 0h1m5 0h1m13 0h1m6 0h1m5 0h1m6 0h1m13 0h1m5 0h1m6 0h1m6 0h1m12 0h1m6 0h1m6 0h1m5 0h1m13 0h1m6 0h1m5 0h1m6 0h1m12 0h1m6 0h1m6 0h1m6 0h1m12 0h1m6 0h1m6 0h1m5 0h1m13 0h1m6 0h1m5 0h1m6 0h1M317 304h1m5 0h1m6 0h1m6 0h1m12 0h1m6 0h1m6 0h1m6 0h1m12 0h1m6 0h1m5 0h1m6 0h1m13 0h1m5 0h1m6 0h1m6 0h1m12 0h1m6 0h1m6 0h1m6 0h1m12 0h1m6 0h1m5 0h1m6 0h1m13 0h1m5 0h1m6 0h1m6 0h1m12 0h1m6 0h1m6 0h1m5 0h1m13 0h1m6 0h1m5 0h1m6 0h1m13 0h1m5 0h1m6 0h1m6 0h1m12 0h1m6 0h1m6 0h1m5 0h1m13 0h1m6 0h1m5 0h1m6 0h1m13 0h1m5 0h1m6 0h1m6 0h1m12 0h1m6 0h1m6 0h1m5 0h1m13 0h1m6 0h1m5 0h1m6 0h1m12 0h1m6 0h1m6 0h1m6 0h1m12 0h1m6 0h1m6 0h1m5 0h1m13 0h1m6 0h1m5 0h1m6 0h1M317 310h1m5 0h1m6 0h1m6 0h1m12 0h1m6 0h1m6 0h1m6 0h1m12 0h1m6 0h1m5 0h1m6 0h1m13 0h1m5 0h1m6 0h1m6 0h1m12 0h1m6 0h1m6 0h1m6 0h1m12 0h1m6 0h1m5 0h1m6 0h1m13 0h1m5 0h1m6 0h1m6 0h1m12 0h1m6 0h1m6 0h1m5 0h1m13 0h1m6 0h1m5 0h1m6 0h1m13 0h1m5 0h1m6 0h1m6 0h1m12 0h1m6 0h1m6 0h1m5 0h1m13 0h1m6 0h1m5 0h1m6 0h1m13 0h1m5 0h1m6 0h1m6 0h1m12 0h1m6 0h1m6 0h1m5 0h1m13 0h1m6 0h1m5 0h1m6 0h1m12 0h1m6 0h1m6 0h1m6 0h1m12 0h1m6 0h1m6 0h1m5 0h1m13 0h1m6 0h1m5 0h1m6 0h1M317 317h1m5 0h1m6 0h1m6 0h1m12 0h1m6 0h1m6 0h1m6 0h1m12 0h1m6 0h1m5 0h1m6 0h1m13 0h1m5 0h1m6 0h1m6 0h1m12 0h1m6 0h1m6 0h1m6 0h1m12 0h1m6 0h1m5 0h1m6 0h1m13 0h1m5 0h1m6 0h1m6 0h1m12 0h1m6 0h1m6 0h1m5 0h1m13 0h1m6 0h1m5 0h1m6 0h1m13 0h1m5 0h1m6 0h1m6 0h1m12 0h1m6 0h1m6 0h1m5 0h1m13 0h1m6 0h1m5 0h1m6 0h1m13 0h1m5 0h1m6 0h1m6 0h1m12 0h1m6 0h1m6 0h1m5 0h1m13 0h1m6 0h1m5 0h1m6 0h1m12 0h1m6 0h1m6 0h1m6 0h1m12 0h1m6 0h1m6 0h1m5 0h1m13 0h1m6 0h1m5 0h1m6 0h1M317 331h1m5 0h1m6 0h1m6 0h1m12 0h1m6 0h1m6 0h1m6 0h1m12 0h1m6 0h1m5 0h1m6 0h1m13 0h1m5 0h1m6 0h1m6 0h1m12 0h1m6 0h1m6 0h1m6 0h1m12 0h1m6 0h1m5 0h1m6 0h1m13 0h1m5 0h1m6 0h1m6 0h1m12 0h1m6 0h1m6 0h1m5 0h1m13 0h1m6 0h1m5 0h1m6 0h1m13 0h1m5 0h1m6 0h1m6 0h1m12 0h1m6 0h1m6 0h1m5 0h1m13 0h1m6 0h1m5 0h1m6 0h1m13 0h1m5 0h1m6 0h1m6 0h1m12 0h1m6 0h1m6 0h1m5 0h1m13 0h1m6 0h1m5 0h1m6 0h1m12 0h1m6 0h1m6 0h1m6 0h1m12 0h1m6 0h1m6 0h1m5 0h1m13 0h1m6 0h1m5 0h1m6 0h1M317 337h1m5 0h1m6 0h1m6 0h1m12 0h1m6 0h1m6 0h1m6 0h1m12 0h1m6 0h1m5 0h1m6 0h1m13 0h1m5 0h1m6 0h1m6 0h1m12 0h1m6 0h1m6 0h1m6 0h1m12 0h1m6 0h1m5 0h1m6 0h1m13 0h1m5 0h1m6 0h1m6 0h1m12 0h1m6 0h1m6 0h1m5 0h1m13 0h1m6 0h1m5 0h1m6 0h1m13 0h1m5 0h1m6 0h1m6 0h1m12 0h1m6 0h1m6 0h1m5 0h1m13 0h1m6 0h1m5 0h1m6 0h1m13 0h1m5 0h1m6 0h1m6 0h1m12 0h1m6 0h1m6 0h1m5 0h1m13 0h1m6 0h1m5 0h1m6 0h1m12 0h1m6 0h1m6 0h1m6 0h1m12 0h1m6 0h1m6 0h1m5 0h1m13 0h1m6 0h1m5 0h1m6 0h1M317 344h1m5 0h1m6 0h1m6 0h1m12 0h1m6 0h1m6 0h1m6 0h1m12 0h1m6 0h1m5 0h1m6 0h1m13 0h1m5 0h1m6 0h1m6 0h1m12 0h1m6 0h1m6 0h1m6 0h1m12 0h1m6 0h1m5 0h1m6 0h1m13 0h1m5 0h1m6 0h1m6 0h1m12 0h1m6 0h1m6 0h1m5 0h1m13 0h1m6 0h1m5 0h1m6 0h1m13 0h1m5 0h1m6 0h1m6 0h1m12 0h1m6 0h1m6 0h1m5 0h1m13 0h1m6 0h1m5 0h1m6 0h1m13 0h1m5 0h1m6 0h1m6 0h1m12 0h1m6 0h1m6 0h1m5 0h1m13 0h1m6 0h1m5 0h1m6 0h1m12 0h1m6 0h1m6 0h1m6 0h1m12 0h1m6 0h1m6 0h1m5 0h1m13 0h1m6 0h1m5 0h1m6 0h1M317 351h1m5 0h1m6 0h1m6 0h1m12 0h1m6 0h1m6 0h1m6 0h1m12 0h1m6 0h1m5 0h1m6 0h1m13 0h1m5 0h1m6 0h1m6 0h1m12 0h1m6 0h1m6 0h1m6 0h1m12 0h1m6 0h1m5 0h1m6 0h1m13 0h1m5 0h1m6 0h1m6 0h1m12 0h1m6 0h1m6 0h1m5 0h1m13 0h1m6 0h1m5 0h1m6 0h1m13 0h1m5 0h1m6 0h1m6 0h1m12 0h1m6 0h1m6 0h1m5 0h1m13 0h1m6 0h1m5 0h1m6 0h1m13 0h1m5 0h1m6 0h1m6 0h1m12 0h1m6 0h1m6 0h1m5 0h1m13 0h1m6 0h1m5 0h1m6 0h1m12 0h1m6 0h1m6 0h1m6 0h1m12 0h1m6 0h1m6 0h1m5 0h1m13 0h1m6 0h1m5 0h1m6 0h1M317 364h1m5 0h1m6 0h1m6 0h1m12 0h1m6 0h1m6 0h1m6 0h1m12 0h1m6 0h1m5 0h1m6 0h1m13 0h1m5 0h1m6 0h1m6 0h1m12 0h1m6 0h1m6 0h1m6 0h1m12 0h1m6 0h1m5 0h1m6 0h1m13 0h1m5 0h1m6 0h1m6 0h1m12 0h1m6 0h1m6 0h1m5 0h1m13 0h1m6 0h1m5 0h1m6 0h1m13 0h1m5 0h1m6 0h1m6 0h1m12 0h1m6 0h1m6 0h1m5 0h1m13 0h1m6 0h1m5 0h1m6 0h1m13 0h1m5 0h1m6 0h1m6 0h1m12 0h1m6 0h1m6 0h1m5 0h1m13 0h1m6 0h1m5 0h1m6 0h1m12 0h1m6 0h1m6 0h1m6 0h1m12 0h1m6 0h1m6 0h1m5 0h1m13 0h1m6 0h1m5 0h1m6 0h1M317 371h1m5 0h1m6 0h1m6 0h1m12 0h1m6 0h1m6 0h1m6 0h1m12 0h1m6 0h1m5 0h1m6 0h1m13 0h1m5 0h1m6 0h1m6 0h1m12 0h1m6 0h1m6 0h1m6 0h1m12 0h1m6 0h1m5 0h1m6 0h1m13 0h1m5 0h1m6 0h1m6 0h1m12 0h1m6 0h1m6 0h1m5 0h1m13 0h1m6 0h1m5 0h1m6 0h1m13 0h1m5 0h1m6 0h1m6 0h1m12 0h1m6 0h1m6 0h1m5 0h1m13 0h1m6 0h1m5 0h1m6 0h1m13 0h1m5 0h1m6 0h1m6 0h1m12 0h1m6 0h1m6 0h1m5 0h1m13 0h1m6 0h1m5 0h1m6 0h1m12 0h1m6 0h1m6 0h1m6 0h1m12 0h1m6 0h1m6 0h1m5 0h1m13 0h1m6 0h1m5 0h1m6 0h1M317 378h1m5 0h1m6 0h1m6 0h1m12 0h1m6 0h1m6 0h1m6 0h1m12 0h1m6 0h1m5 0h1m6 0h1m13 0h1m5 0h1m6 0h1m6 0h1m12 0h1m6 0h1m6 0h1m6 0h1m12 0h1m6 0h1m5 0h1m6 0h1m13 0h1m5 0h1m6 0h1m6 0h1m12 0h1m6 0h1m6 0h1m5 0h1m13 0h1m6 0h1m5 0h1m6 0h1m13 0h1m5 0h1m6 0h1m6 0h1m12 0h1m6 0h1m6 0h1m5 0h1m13 0h1m6 0h1m5 0h1m6 0h1m13 0h1m5 0h1m6 0h1m6 0h1m12 0h1m6 0h1m6 0h1m5 0h1m13 0h1m6 0h1m5 0h1m6 0h1m12 0h1m6 0h1m6 0h1m6 0h1m12 0h1m6 0h1m6 0h1m5 0h1m13 0h1m6 0h1m5 0h1m6 0h1M317 384h1m5 0h1m6 0h1m6 0h1m12 0h1m6 0h1m6 0h1m6 0h1m12 0h1m6 0h1m5 0h1m6 0h1m13 0h1m5 0h1m6 0h1m6 0h1m12 0h1m6 0h1m6 0h1m6 0h1m12 0h1m6 0h1m5 0h1m6 0h1m13 0h1m5 0h1m6 0h1m6 0h1m12 0h1m6 0h1m6 0h1m5 0h1m13 0h1m6 0h1m5 0h1m6 0h1m13 0h1m5 0h1m6 0h1m6 0h1m12 0h1m6 0h1m6 0h1m5 0h1m13 0h1m6 0h1m5 0h1m6 0h1m13 0h1m5 0h1m6 0h1m6 0h1m12 0h1m6 0h1m6 0h1m5 0h1m13 0h1m6 0h1m5 0h1m6 0h1m12 0h1m6 0h1m6 0h1m6 0h1m12 0h1m6 0h1m6 0h1m5 0h1m13 0h1m6 0h1m5 0h1m6 0h1M317 398h1m5 0h1m6 0h1m6 0h1m12 0h1m6 0h1m6 0h1m6 0h1m12 0h1m6 0h1m5 0h1m6 0h1m13 0h1m5 0h1m6 0h1m6 0h1m12 0h1m6 0h1m6 0h1m6 0h1m12 0h1m6 0h1m5 0h1m6 0h1m13 0h1m5 0h1m6 0h1m6 0h1m12 0h1m6 0h1m6 0h1m5 0h1m13 0h1m6 0h1m5 0h1m6 0h1m13 0h1m5 0h1m6 0h1m6 0h1m12 0h1m6 0h1m6 0h1m5 0h1m13 0h1m6 0h1m5 0h1m6 0h1m13 0h1m5 0h1m6 0h1m6 0h1m12 0h1m6 0h1m6 0h1m5 0h1m13 0h1m6 0h1m5 0h1m6 0h1m12 0h1m6 0h1m6 0h1m6 0h1m12 0h1m6 0h1m6 0h1m5 0h1m13 0h1m6 0h1m5 0h1m6 0h1M317 404h1m5 0h1m6 0h1m6 0h1m12 0h1m6 0h1m6 0h1m6 0h1m12 0h1m6 0h1m5 0h1m6 0h1m13 0h1m5 0h1m6 0h1m6 0h1m12 0h1m6 0h1m6 0h1m6 0h1m12 0h1m6 0h1m5 0h1m6 0h1m13 0h1m5 0h1m6 0h1m6 0h1m12 0h1m6 0h1m6 0h1m5 0h1m13 0h1m6 0h1m5 0h1m6 0h1m13 0h1m5 0h1m6 0h1m6 0h1m12 0h1m6 0h1m6 0h1m5 0h1m13 0h1m6 0h1m5 0h1m6 0h1m13 0h1m5 0h1m6 0h1m6 0h1m12 0h1m6 0h1m6 0h1m5 0h1m13 0h1m6 0h1m5 0h1m6 0h1m12 0h1m6 0h1m6 0h1m6 0h1m12 0h1m6 0h1m6 0h1m5 0h1m13 0h1m6 0h1m5 0h1m6 0h1M317 411h1m5 0h1m6 0h1m6 0h1m12 0h1m6 0h1m6 0h1m6 0h1m12 0h1m6 0h1m5 0h1m6 0h1m13 0h1m5 0h1m6 0h1m6 0h1m12 0h1m6 0h1m6 0h1m6 0h1m12 0h1m6 0h1m5 0h1m6 0h1m13 0h1m5 0h1m6 0h1m6 0h1m12 0h1m6 0h1m6 0h1m5 0h1m13 0h1m6 0h1m5 0h1m6 0h1m13 0h1m5 0h1m6 0h1m6 0h1m12 0h1m6 0h1m6 0h1m5 0h1m13 0h1m6 0h1m5 0h1m6 0h1m13 0h1m5 0h1m6 0h1m6 0h1m12 0h1m6 0h1m6 0h1m5 0h1m13 0h1m6 0h1m5 0h1m6 0h1m12 0h1m6 0h1m6 0h1m6 0h1m12 0h1m6 0h1m6 0h1m5 0h1m13 0h1m6 0h1m5 0h1m6 0h1M317 418h1m5 0h1m6 0h1m6 0h1m12 0h1m6 0h1m6 0h1m6 0h1m12 0h1m6 0h1m5 0h1m6 0h1m13 0h1m5 0h1m6 0h1m6 0h1m12 0h1m6 0h1m6 0h1m6 0h1m12 0h1m6 0h1m5 0h1m6 0h1m13 0h1m5 0h1m6 0h1m6 0h1m12 0h1m6 0h1m6 0h1m5 0h1m13 0h1m6 0h1m5 0h1m6 0h1m13 0h1m5 0h1m6 0h1m6 0h1m12 0h1m6 0h1m6 0h1m5 0h1m13 0h1m6 0h1m5 0h1m6 0h1m13 0h1m5 0h1m6 0h1m6 0h1m12 0h1m6 0h1m6 0h1m5 0h1m13 0h1m6 0h1m5 0h1m6 0h1m12 0h1m6 0h1m6 0h1m6 0h1m12 0h1m6 0h1m6 0h1m5 0h1m13 0h1m6 0h1m5 0h1m6 0h1M317 431h1m5 0h1m6 0h1m6 0h1m12 0h1m6 0h1m6 0h1m6 0h1m12 0h1m6 0h1m5 0h1m6 0h1m13 0h1m5 0h1m6 0h1m6 0h1m12 0h1m6 0h1m6 0h1m6 0h1m12 0h1m6 0h1m5 0h1m6 0h1m13 0h1m5 0h1m6 0h1m6 0h1m12 0h1m6 0h1m6 0h1m5 0h1m13 0h1m6 0h1m5 0h1m6 0h1m13 0h1m5 0h1m6 0h1m6 0h1m12 0h1m6 0h1m6 0h1m5 0h1m13 0h1m6 0h1m5 0h1m6 0h1m13 0h1m5 0h1m6 0h1m6 0h1m12 0h1m6 0h1m6 0h1m5 0h1m13 0h1m6 0h1m5 0h1m6 0h1m12 0h1m6 0h1m6 0h1m6 0h1m12 0h1m6 0h1m6 0h1m5 0h1m13 0h1m6 0h1m5 0h1m6 0h1M317 438h1m5 0h1m6 0h1m6 0h1m12 0h1m6 0h1m6 0h1m6 0h1m12 0h1m6 0h1m5 0h1m6 0h1m13 0h1m5 0h1m6 0h1m6 0h1m12 0h1m6 0h1m6 0h1m6 0h1m12 0h1m6 0h1m5 0h1m6 0h1m13 0h1m5 0h1m6 0h1m6 0h1m12 0h1m6 0h1m6 0h1m5 0h1m13 0h1m6 0h1m5 0h1m6 0h1m13 0h1m5 0h1m6 0h1m6 0h1m12 0h1m6 0h1m6 0h1m5 0h1m13 0h1m6 0h1m5 0h1m6 0h1m13 0h1m5 0h1m6 0h1m6 0h1m12 0h1m6 0h1m6 0h1m5 0h1m13 0h1m6 0h1m5 0h1m6 0h1m12 0h1m6 0h1m6 0h1m6 0h1m12 0h1m6 0h1m6 0h1m5 0h1m13 0h1m6 0h1m5 0h1m6 0h1M317 445h1m5 0h1m6 0h1m6 0h1m12 0h1m6 0h1m6 0h1m6 0h1m12 0h1m6 0h1m5 0h1m6 0h1m13 0h1m5 0h1m6 0h1m6 0h1m12 0h1m6 0h1m6 0h1m6 0h1m12 0h1m6 0h1m5 0h1m6 0h1m13 0h1m5 0h1m6 0h1m6 0h1m12 0h1m6 0h1m6 0h1m5 0h1m13 0h1m6 0h1m5 0h1m6 0h1m13 0h1m5 0h1m6 0h1m6 0h1m12 0h1m6 0h1m6 0h1m5 0h1m13 0h1m6 0h1m5 0h1m6 0h1m13 0h1m5 0h1m6 0h1m6 0h1m12 0h1m6 0h1m6 0h1m5 0h1m13 0h1m6 0h1m5 0h1m6 0h1m12 0h1m6 0h1m6 0h1m6 0h1m12 0h1m6 0h1m6 0h1m5 0h1m13 0h1m6 0h1m5 0h1m6 0h1M317 451h1m5 0h1m6 0h1m6 0h1m12 0h1m6 0h1m6 0h1m6 0h1m12 0h1m6 0h1m5 0h1m6 0h1m13 0h1m5 0h1m6 0h1m6 0h1m12 0h1m6 0h1m6 0h1m6 0h1m12 0h1m6 0h1m5 0h1m6 0h1m13 0h1m5 0h1m6 0h1m6 0h1m12 0h1m6 0h1m6 0h1m5 0h1m13 0h1m6 0h1m5 0h1m6 0h1m13 0h1m5 0h1m6 0h1m6 0h1m12 0h1m6 0h1m6 0h1m5 0h1m13 0h1m6 0h1m5 0h1m6 0h1m13 0h1m5 0h1m6 0h1m6 0h1m12 0h1m6 0h1m6 0h1m5 0h1m13 0h1m6 0h1m5 0h1m6 0h1m12 0h1m6 0h1m6 0h1m6 0h1m12 0h1m6 0h1m6 0h1m5 0h1m13 0h1m6 0h1m5 0h1m6 0h1M317 465h1m5 0h1m6 0h1m6 0h1m12 0h1m6 0h1m6 0h1m6 0h1m12 0h1m6 0h1m5 0h1m6 0h1m13 0h1m5 0h1m6 0h1m6 0h1m12 0h1m6 0h1m6 0h1m6 0h1m12 0h1m6 0h1m5 0h1m6 0h1m13 0h1m5 0h1m6 0h1m6 0h1m12 0h1m6 0h1m6 0h1m5 0h1m13 0h1m6 0h1m5 0h1m6 0h1m13 0h1m5 0h1m6 0h1m6 0h1m12 0h1m6 0h1m6 0h1m5 0h1m13 0h1m6 0h1m5 0h1m6 0h1m13 0h1m5 0h1m6 0h1m6 0h1m12 0h1m6 0h1m6 0h1m5 0h1m13 0h1m6 0h1m5 0h1m6 0h1m12 0h1m6 0h1m6 0h1m6 0h1m12 0h1m6 0h1m6 0h1m5 0h1m13 0h1m6 0h1m5 0h1m6 0h1M317 472h1m5 0h1m6 0h1m6 0h1m12 0h1m6 0h1m6 0h1m6 0h1m12 0h1m6 0h1m5 0h1m6 0h1m13 0h1m5 0h1m6 0h1m6 0h1m12 0h1m6 0h1m6 0h1m6 0h1m12 0h1m6 0h1m5 0h1m6 0h1m13 0h1m5 0h1m6 0h1m6 0h1m12 0h1m6 0h1m6 0h1m5 0h1m13 0h1m6 0h1m5 0h1m6 0h1m13 0h1m5 0h1m6 0h1m6 0h1m12 0h1m6 0h1m6 0h1m5 0h1m13 0h1m6 0h1m5 0h1m6 0h1m13 0h1m5 0h1m6 0h1m6 0h1m12 0h1m6 0h1m6 0h1m5 0h1m13 0h1m6 0h1m5 0h1m6 0h1m12 0h1m6 0h1m6 0h1m6 0h1m12 0h1m6 0h1m6 0h1m5 0h1m13 0h1m6 0h1m5 0h1m6 0h1M317 478h1m5 0h1m6 0h1m6 0h1m12 0h1m6 0h1m6 0h1m6 0h1m12 0h1m6 0h1m5 0h1m6 0h1m13 0h1m5 0h1m6 0h1m6 0h1m12 0h1m6 0h1m6 0h1m6 0h1m12 0h1m6 0h1m5 0h1m6 0h1m13 0h1m5 0h1m6 0h1m6 0h1m12 0h1m6 0h1m6 0h1m5 0h1m13 0h1m6 0h1m5 0h1m6 0h1m13 0h1m5 0h1m6 0h1m6 0h1m12 0h1m6 0h1m6 0h1m5 0h1m13 0h1m6 0h1m5 0h1m6 0h1m13 0h1m5 0h1m6 0h1m6 0h1m12 0h1m6 0h1m6 0h1m5 0h1m13 0h1m6 0h1m5 0h1m6 0h1m12 0h1m6 0h1m6 0h1m6 0h1m12 0h1m6 0h1m6 0h1m5 0h1m13 0h1m6 0h1m5 0h1m6 0h1M317 485h1m5 0h1m6 0h1m6 0h1m12 0h1m6 0h1m6 0h1m6 0h1m12 0h1m6 0h1m5 0h1m6 0h1m13 0h1m5 0h1m6 0h1m6 0h1m12 0h1m6 0h1m6 0h1m6 0h1m12 0h1m6 0h1m5 0h1m6 0h1m13 0h1m5 0h1m6 0h1m6 0h1m12 0h1m6 0h1m6 0h1m5 0h1m13 0h1m6 0h1m5 0h1m6 0h1m13 0h1m5 0h1m6 0h1m6 0h1m12 0h1m6 0h1m6 0h1m5 0h1m13 0h1m6 0h1m5 0h1m6 0h1m13 0h1m5 0h1m6 0h1m6 0h1m12 0h1m6 0h1m6 0h1m5 0h1m13 0h1m6 0h1m5 0h1m6 0h1m12 0h1m6 0h1m6 0h1m6 0h1m12 0h1m6 0h1m6 0h1m5 0h1m13 0h1m6 0h1m5 0h1m6 0h1M317 499h1m5 0h1m6 0h1m6 0h1m12 0h1m6 0h1m6 0h1m6 0h1m12 0h1m6 0h1m5 0h1m6 0h1m13 0h1m5 0h1m6 0h1m6 0h1m12 0h1m6 0h1m6 0h1m6 0h1m12 0h1m6 0h1m5 0h1m6 0h1m13 0h1m5 0h1m6 0h1m6 0h1m12 0h1m6 0h1m6 0h1m5 0h1m13 0h1m6 0h1m5 0h1m6 0h1m13 0h1m5 0h1m6 0h1m6 0h1m12 0h1m6 0h1m6 0h1m5 0h1m13 0h1m6 0h1m5 0h1m6 0h1m13 0h1m5 0h1m6 0h1m6 0h1m12 0h1m6 0h1m6 0h1m5 0h1m13 0h1m6 0h1m5 0h1m6 0h1m12 0h1m6 0h1m6 0h1m6 0h1m12 0h1m6 0h1m6 0h1m5 0h1m13 0h1m6 0h1m5 0h1m6 0h1M317 505h1m5 0h1m6 0h1m6 0h1m12 0h1m6 0h1m6 0h1m6 0h1m12 0h1m6 0h1m5 0h1m6 0h1m13 0h1m5 0h1m6 0h1m6 0h1m12 0h1m6 0h1m6 0h1m6 0h1m12 0h1m6 0h1m5 0h1m6 0h1m13 0h1m5 0h1m6 0h1m6 0h1m12 0h1m6 0h1m6 0h1m5 0h1m13 0h1m6 0h1m5 0h1m6 0h1m13 0h1m5 0h1m6 0h1m6 0h1m12 0h1m6 0h1m6 0h1m5 0h1m13 0h1m6 0h1m5 0h1m6 0h1m13 0h1m5 0h1m6 0h1m6 0h1m12 0h1m6 0h1m6 0h1m5 0h1m13 0h1m6 0h1m5 0h1m6 0h1m12 0h1m6 0h1m6 0h1m6 0h1m12 0h1m6 0h1m6 0h1m5 0h1m13 0h1m6 0h1m5 0h1m6 0h1M317 512h1m5 0h1m6 0h1m6 0h1m12 0h1m6 0h1m6 0h1m6 0h1m12 0h1m6 0h1m5 0h1m6 0h1m13 0h1m5 0h1m6 0h1m6 0h1m12 0h1m6 0h1m6 0h1m6 0h1m12 0h1m6 0h1m5 0h1m6 0h1m13 0h1m5 0h1m6 0h1m6 0h1m12 0h1m6 0h1m6 0h1m5 0h1m13 0h1m6 0h1m5 0h1m6 0h1m13 0h1m5 0h1m6 0h1m6 0h1m12 0h1m6 0h1m6 0h1m5 0h1m13 0h1m6 0h1m5 0h1m6 0h1m13 0h1m5 0h1m6 0h1m6 0h1m12 0h1m6 0h1m6 0h1m5 0h1m13 0h1m6 0h1m5 0h1m6 0h1m12 0h1m6 0h1m6 0h1m6 0h1m12 0h1m6 0h1m6 0h1m5 0h1m13 0h1m6 0h1m5 0h1m6 0h1M317 519h1m5 0h1m6 0h1m6 0h1m12 0h1m6 0h1m6 0h1m6 0h1m12 0h1m6 0h1m5 0h1m6 0h1m13 0h1m5 0h1m6 0h1m6 0h1m12 0h1m6 0h1m6 0h1m6 0h1m12 0h1m6 0h1m5 0h1m6 0h1m13 0h1m5 0h1m6 0h1m6 0h1m12 0h1m6 0h1m6 0h1m5 0h1m13 0h1m6 0h1m5 0h1m6 0h1m13 0h1m5 0h1m6 0h1m6 0h1m12 0h1m6 0h1m6 0h1m5 0h1m13 0h1m6 0h1m5 0h1m6 0h1m13 0h1m5 0h1m6 0h1m6 0h1m12 0h1m6 0h1m6 0h1m5 0h1m13 0h1m6 0h1m5 0h1m6 0h1m12 0h1m6 0h1m6 0h1m6 0h1m12 0h1m6 0h1m6 0h1m5 0h1m13 0h1m6 0h1m5 0h1m6 0h1M317 532h1m5 0h1m6 0h1m6 0h1m12 0h1m6 0h1m6 0h1m6 0h1m12 0h1m6 0h1m5 0h1m6 0h1m13 0h1m5 0h1m6 0h1m6 0h1m12 0h1m6 0h1m6 0h1m6 0h1m12 0h1m6 0h1m5 0h1m6 0h1m13 0h1m5 0h1m6 0h1m6 0h1m12 0h1m6 0h1m6 0h1m5 0h1m13 0h1m6 0h1m5 0h1m6 0h1m13 0h1m5 0h1m6 0h1m6 0h1m12 0h1m6 0h1m6 0h1m5 0h1m13 0h1m6 0h1m5 0h1m6 0h1m13 0h1m5 0h1m6 0h1m6 0h1m12 0h1m6 0h1m6 0h1m5 0h1m13 0h1m6 0h1m5 0h1m6 0h1m12 0h1m6 0h1m6 0h1m6 0h1m12 0h1m6 0h1m6 0h1m5 0h1m13 0h1m6 0h1m5 0h1m6 0h1M317 539h1m5 0h1m6 0h1m6 0h1m12 0h1m6 0h1m6 0h1m6 0h1m12 0h1m6 0h1m5 0h1m6 0h1m13 0h1m5 0h1m6 0h1m6 0h1m12 0h1m6 0h1m6 0h1m6 0h1m12 0h1m6 0h1m5 0h1m6 0h1m13 0h1m5 0h1m6 0h1m6 0h1m12 0h1m6 0h1m6 0h1m5 0h1m13 0h1m6 0h1m5 0h1m6 0h1m13 0h1m5 0h1m6 0h1m6 0h1m12 0h1m6 0h1m6 0h1m5 0h1m13 0h1m6 0h1m5 0h1m6 0h1m13 0h1m5 0h1m6 0h1m6 0h1m12 0h1m6 0h1m6 0h1m5 0h1m13 0h1m6 0h1m5 0h1m6 0h1m12 0h1m6 0h1m6 0h1m6 0h1m12 0h1m6 0h1m6 0h1m5 0h1m13 0h1m6 0h1m5 0h1m6 0h1M317 546h1m5 0h1m6 0h1m6 0h1m12 0h1m6 0h1m6 0h1m6 0h1m12 0h1m6 0h1m5 0h1m6 0h1m13 0h1m5 0h1m6 0h1m6 0h1m12 0h1m6 0h1m6 0h1m6 0h1m12 0h1m6 0h1m5 0h1m6 0h1m13 0h1m5 0h1m6 0h1m6 0h1m12 0h1m6 0h1m6 0h1m5 0h1m13 0h1m6 0h1m5 0h1m6 0h1m13 0h1m5 0h1m6 0h1m6 0h1m12 0h1m6 0h1m6 0h1m5 0h1m13 0h1m6 0h1m5 0h1m6 0h1m13 0h1m5 0h1m6 0h1m6 0h1m12 0h1m6 0h1m6 0h1m5 0h1m13 0h1m6 0h1m5 0h1m6 0h1m12 0h1m6 0h1m6 0h1m6 0h1m12 0h1m6 0h1m6 0h1m5 0h1m13 0h1m6 0h1m5 0h1m6 0h1M317 552h1m5 0h1m6 0h1m6 0h1m12 0h1m6 0h1m6 0h1m6 0h1m12 0h1m6 0h1m5 0h1m6 0h1m13 0h1m5 0h1m6 0h1m6 0h1m12 0h1m6 0h1m6 0h1m6 0h1m12 0h1m6 0h1m5 0h1m6 0h1m13 0h1m5 0h1m6 0h1m6 0h1m12 0h1m6 0h1m6 0h1m5 0h1m13 0h1m6 0h1m5 0h1m6 0h1m13 0h1m5 0h1m6 0h1m6 0h1m12 0h1m6 0h1m6 0h1m5 0h1m13 0h1m6 0h1m5 0h1m6 0h1m13 0h1m5 0h1m6 0h1m6 0h1m12 0h1m6 0h1m6 0h1m5 0h1m13 0h1m6 0h1m5 0h1m6 0h1m12 0h1m6 0h1m6 0h1m6 0h1m12 0h1m6 0h1m6 0h1m5 0h1m13 0h1m6 0h1m5 0h1m6 0h1M317 566h1m5 0h1m6 0h1m6 0h1m12 0h1m6 0h1m6 0h1m6 0h1m12 0h1m6 0h1m5 0h1m6 0h1m13 0h1m5 0h1m6 0h1m6 0h1m12 0h1m6 0h1m6 0h1m6 0h1m12 0h1m6 0h1m5 0h1m6 0h1m13 0h1m5 0h1m6 0h1m6 0h1m12 0h1m6 0h1m6 0h1m5 0h1m13 0h1m6 0h1m5 0h1m6 0h1m13 0h1m5 0h1m6 0h1m6 0h1m12 0h1m6 0h1m6 0h1m5 0h1m13 0h1m6 0h1m5 0h1m6 0h1m13 0h1m5 0h1m6 0h1m6 0h1m12 0h1m6 0h1m6 0h1m5 0h1m13 0h1m6 0h1m5 0h1m6 0h1m12 0h1m6 0h1m6 0h1m6 0h1m12 0h1m6 0h1m6 0h1m5 0h1m13 0h1m6 0h1m5 0h1m6 0h1M317 572h1m5 0h1m6 0h1m6 0h1m12 0h1m6 0h1m6 0h1m6 0h1m12 0h1m6 0h1m5 0h1m6 0h1m13 0h1m5 0h1m6 0h1m6 0h1m12 0h1m6 0h1m6 0h1m6 0h1m12 0h1m6 0h1m5 0h1m6 0h1m13 0h1m5 0h1m6 0h1m6 0h1m12 0h1m6 0h1m6 0h1m5 0h1m13 0h1m6 0h1m5 0h1m6 0h1m13 0h1m5 0h1m6 0h1m6 0h1m12 0h1m6 0h1m6 0h1m5 0h1m13 0h1m6 0h1m5 0h1m6 0h1m13 0h1m5 0h1m6 0h1m6 0h1m12 0h1m6 0h1m6 0h1m5 0h1m13 0h1m6 0h1m5 0h1m6 0h1m12 0h1m6 0h1m6 0h1m6 0h1m12 0h1m6 0h1m6 0h1m5 0h1m13 0h1m6 0h1m5 0h1m6 0h1M317 579h1m5 0h1m6 0h1m6 0h1m12 0h1m6 0h1m6 0h1m6 0h1m12 0h1m6 0h1m5 0h1m6 0h1m13 0h1m5 0h1m6 0h1m6 0h1m12 0h1m6 0h1m6 0h1m6 0h1m12 0h1m6 0h1m5 0h1m6 0h1m13 0h1m5 0h1m6 0h1m6 0h1m12 0h1m6 0h1m6 0h1m5 0h1m13 0h1m6 0h1m5 0h1m6 0h1m13 0h1m5 0h1m6 0h1m6 0h1m12 0h1m6 0h1m6 0h1m5 0h1m13 0h1m6 0h1m5 0h1m6 0h1m13 0h1m5 0h1m6 0h1m6 0h1m12 0h1m6 0h1m6 0h1m5 0h1m13 0h1m6 0h1m5 0h1m6 0h1m12 0h1m6 0h1m6 0h1m6 0h1m12 0h1m6 0h1m6 0h1m5 0h1m13 0h1m6 0h1m5 0h1m6 0h1M317 586h1m5 0h1m6 0h1m6 0h1m12 0h1m6 0h1m6 0h1m6 0h1m12 0h1m6 0h1m5 0h1m6 0h1m13 0h1m5 0h1m6 0h1m6 0h1m12 0h1m6 0h1m6 0h1m6 0h1m12 0h1m6 0h1m5 0h1m6 0h1m13 0h1m5 0h1m6 0h1m6 0h1m12 0h1m6 0h1m6 0h1m5 0h1m13 0h1m6 0h1m5 0h1m6 0h1m13 0h1m5 0h1m6 0h1m6 0h1m12 0h1m6 0h1m6 0h1m5 0h1m13 0h1m6 0h1m5 0h1m6 0h1m13 0h1m5 0h1m6 0h1m6 0h1m12 0h1m6 0h1m6 0h1m5 0h1m13 0h1m6 0h1m5 0h1m6 0h1m12 0h1m6 0h1m6 0h1m6 0h1m12 0h1m6 0h1m6 0h1m5 0h1m13 0h1m6 0h1m5 0h1m6 0h1M317 599h1m5 0h1m6 0h1m6 0h1m12 0h1m6 0h1m6 0h1m6 0h1m12 0h1m6 0h1m5 0h1m6 0h1m13 0h1m5 0h1m6 0h1m6 0h1m12 0h1m6 0h1m6 0h1m6 0h1m12 0h1m6 0h1m5 0h1m6 0h1m13 0h1m5 0h1m6 0h1m6 0h1m12 0h1m6 0h1m6 0h1m5 0h1m13 0h1m6 0h1m5 0h1m6 0h1m13 0h1m5 0h1m6 0h1m6 0h1m12 0h1m6 0h1m6 0h1m5 0h1m13 0h1m6 0h1m5 0h1m6 0h1m13 0h1m5 0h1m6 0h1m6 0h1m12 0h1m6 0h1m6 0h1m5 0h1m13 0h1m6 0h1m5 0h1m6 0h1m12 0h1m6 0h1m6 0h1m6 0h1m12 0h1m6 0h1m6 0h1m5 0h1m13 0h1m6 0h1m5 0h1m6 0h1M317 606h1m5 0h1m6 0h1m6 0h1m12 0h1m6 0h1m6 0h1m6 0h1m12 0h1m6 0h1m5 0h1m6 0h1m13 0h1m5 0h1m6 0h1m6 0h1m12 0h1m6 0h1m6 0h1m6 0h1m12 0h1m6 0h1m5 0h1m6 0h1m13 0h1m5 0h1m6 0h1m6 0h1m12 0h1m6 0h1m6 0h1m5 0h1m13 0h1m6 0h1m5 0h1m6 0h1m13 0h1m5 0h1m6 0h1m6 0h1m12 0h1m6 0h1m6 0h1m5 0h1m13 0h1m6 0h1m5 0h1m6 0h1m13 0h1m5 0h1m6 0h1m6 0h1m12 0h1m6 0h1m6 0h1m5 0h1m13 0h1m6 0h1m5 0h1m6 0h1m12 0h1m6 0h1m6 0h1m6 0h1m12 0h1m6 0h1m6 0h1m5 0h1m13 0h1m6 0h1m5 0h1m6 0h1M317 613h1m5 0h1m6 0h1m6 0h1m12 0h1m6 0h1m6 0h1m6 0h1m12 0h1m6 0h1m5 0h1m6 0h1m13 0h1m5 0h1m6 0h1m6 0h1m12 0h1m6 0h1m6 0h1m6 0h1m12 0h1m6 0h1m5 0h1m6 0h1m13 0h1m5 0h1m6 0h1m6 0h1m12 0h1m6 0h1m6 0h1m5 0h1m13 0h1m6 0h1m5 0h1m6 0h1m13 0h1m5 0h1m6 0h1m6 0h1m12 0h1m6 0h1m6 0h1m5 0h1m13 0h1m6 0h1m5 0h1m6 0h1m13 0h1m5 0h1m6 0h1m6 0h1m12 0h1m6 0h1m6 0h1m5 0h1m13 0h1m6 0h1m5 0h1m6 0h1m12 0h1m6 0h1m6 0h1m6 0h1m12 0h1m6 0h1m6 0h1m5 0h1m13 0h1m6 0h1m5 0h1m6 0h1M317 619h1m5 0h1m6 0h1m6 0h1m12 0h1m6 0h1m6 0h1m6 0h1m12 0h1m6 0h1m5 0h1m6 0h1m13 0h1m5 0h1m6 0h1m6 0h1m12 0h1m6 0h1m6 0h1m6 0h1m12 0h1m6 0h1m5 0h1m6 0h1m13 0h1m5 0h1m6 0h1m6 0h1m12 0h1m6 0h1m6 0h1m5 0h1m13 0h1m6 0h1m5 0h1m6 0h1m13 0h1m5 0h1m6 0h1m6 0h1m12 0h1m6 0h1m6 0h1m5 0h1m13 0h1m6 0h1m5 0h1m6 0h1m13 0h1m5 0h1m6 0h1m6 0h1m12 0h1m6 0h1m6 0h1m5 0h1m13 0h1m6 0h1m5 0h1m6 0h1m12 0h1m6 0h1m6 0h1m6 0h1m12 0h1m6 0h1m6 0h1m5 0h1m13 0h1m6 0h1m5 0h1m6 0h1M317 633h1m5 0h1m6 0h1m6 0h1m12 0h1m6 0h1m6 0h1m6 0h1m12 0h1m6 0h1m5 0h1m6 0h1m13 0h1m5 0h1m6 0h1m6 0h1m12 0h1m6 0h1m6 0h1m6 0h1m12 0h1m6 0h1m5 0h1m6 0h1m13 0h1m5 0h1m6 0h1m6 0h1m12 0h1m6 0h1m6 0h1m5 0h1m13 0h1m6 0h1m5 0h1m6 0h1m13 0h1m5 0h1m6 0h1m6 0h1m12 0h1m6 0h1m6 0h1m5 0h1m13 0h1m6 0h1m5 0h1m6 0h1m13 0h1m5 0h1m6 0h1m6 0h1m12 0h1m6 0h1m6 0h1m5 0h1m13 0h1m6 0h1m5 0h1m6 0h1m12 0h1m6 0h1m6 0h1m6 0h1m12 0h1m6 0h1m6 0h1m5 0h1m13 0h1m6 0h1m5 0h1m6 0h1M317 640h1m5 0h1m6 0h1m6 0h1m12 0h1m6 0h1m6 0h1m6 0h1m12 0h1m6 0h1m5 0h1m6 0h1m13 0h1m5 0h1m6 0h1m6 0h1m12 0h1m6 0h1m6 0h1m6 0h1m12 0h1m6 0h1m5 0h1m6 0h1m13 0h1m5 0h1m6 0h1m6 0h1m12 0h1m6 0h1m6 0h1m5 0h1m13 0h1m6 0h1m5 0h1m6 0h1m13 0h1m5 0h1m6 0h1m6 0h1m12 0h1m6 0h1m6 0h1m5 0h1m13 0h1m6 0h1m5 0h1m6 0h1m13 0h1m5 0h1m6 0h1m6 0h1m12 0h1m6 0h1m6 0h1m5 0h1m13 0h1m6 0h1m5 0h1m6 0h1m12 0h1m6 0h1m6 0h1m6 0h1m12 0h1m6 0h1m6 0h1m5 0h1m13 0h1m6 0h1m5 0h1m6 0h1M317 646h1m5 0h1m6 0h1m6 0h1m12 0h1m6 0h1m6 0h1m6 0h1m12 0h1m6 0h1m5 0h1m6 0h1m13 0h1m5 0h1m6 0h1m6 0h1m12 0h1m6 0h1m6 0h1m6 0h1m12 0h1m6 0h1m5 0h1m6 0h1m13 0h1m5 0h1m6 0h1m6 0h1m12 0h1m6 0h1m6 0h1m5 0h1m13 0h1m6 0h1m5 0h1m6 0h1m13 0h1m5 0h1m6 0h1m6 0h1m12 0h1m6 0h1m6 0h1m5 0h1m13 0h1m6 0h1m5 0h1m6 0h1m13 0h1m5 0h1m6 0h1m6 0h1m12 0h1m6 0h1m6 0h1m5 0h1m13 0h1m6 0h1m5 0h1m6 0h1m12 0h1m6 0h1m6 0h1m6 0h1m12 0h1m6 0h1m6 0h1m5 0h1m13 0h1m6 0h1m5 0h1m6 0h1M317 653h1m5 0h1m6 0h1m6 0h1m12 0h1m6 0h1m6 0h1m6 0h1m12 0h1m6 0h1m5 0h1m6 0h1m13 0h1m5 0h1m6 0h1m6 0h1m12 0h1m6 0h1m6 0h1m6 0h1m12 0h1m6 0h1m5 0h1m6 0h1m13 0h1m5 0h1m6 0h1m6 0h1m12 0h1m6 0h1m6 0h1m5 0h1m13 0h1m6 0h1m5 0h1m6 0h1m13 0h1m5 0h1m6 0h1m6 0h1m12 0h1m6 0h1m6 0h1m5 0h1m13 0h1m6 0h1m5 0h1m6 0h1m13 0h1m5 0h1m6 0h1m6 0h1m12 0h1m6 0h1m6 0h1m5 0h1m13 0h1m6 0h1m5 0h1m6 0h1m12 0h1m6 0h1m6 0h1m6 0h1m12 0h1m6 0h1m6 0h1m5 0h1m13 0h1m6 0h1m5 0h1m6 0h1" stroke="#333" stroke-width="1" transform="translate(0 0.5)" shape-rendering="crispEdges"/>
<path d="M310.5 27V657 M344.5 27V657 M377.5 27V657 M411.5 27V657 M445.5 27V657 M478.5 27V657 M512.5 27V657 M546.5 27V657 M579.5 27V657 M613.5 27V657 M646.5 27V657 M680.5 27V657 M714.5 27V657 M747.5 27V657 M781.5 27V657 M815.5 27V657 M848.5 27V657 M882.5 27V657 M309 55.5H913 M309 89.5H913 M309 122.5H913 M309 156.5H913 M309 189.5H913 M309 223.5H913 M309 257.5H913 M309 290.5H913 M309 324.5H913 M309 357.5H913 M309 391.5H913 M309 425.5H913 M309 458.5H913 M309 492.5H913 M309 525.5H913 M309 559.5H913 M309 593.5H913 M309 626.5H913" stroke="#4c4c56" stroke-width="1" fill="none"/>
<path d="M468.35 127.90A10.3 11.55 0 1 0 447.75 127.90A10.3 11.55 0 1 0 468.35 127.90M458.60 135.30 L469.30 141.60 M484.40 115.00 V140.80 M483.90 116.20 L476.70 124.00 M791.15 127.90A10.3 11.55 0 1 0 770.55 127.90A10.3 11.55 0 1 0 791.15 127.90M781.40 135.30 L792.10 141.60 M798.80 122.80 C799.00 118.60 801.90 116.45 805.60 116.45 C809.50 116.45 812.40 118.90 812.40 122.40 C812.40 125.60 810.50 127.60 807.90 130.10 L798.90 139.35 H813.90 M672.46 158.85A10.1 11.450000000000001 0 1 0 673.07 171.97M679.80 161.00 C680.00 156.80 682.90 154.65 686.60 154.65 C690.50 154.65 693.40 157.10 693.40 160.60 C693.40 163.80 691.50 165.80 688.90 168.30 L679.90 177.35 H694.90 M338.55 250.80 V225.45 H349.70 C353.90 225.45 355.75 228.30 355.75 232.00 C355.75 235.70 353.90 238.50 349.70 238.50 H338.55 M370.40 224.00 V250.80 M369.90 225.20 L362.70 233.40 M674.56 354.04A10.1 11.950000000000001 0 1 0 675.17 367.73M690.40 349.00 V373.80 M689.90 350.20 L682.70 357.00 M478.25 529.90 V505.45 H489.80 C493.80 505.45 495.25 508.00 495.25 511.00 C495.25 514.20 493.80 516.60 489.80 516.60 H478.25 M488.00 516.60 L497.20 529.10 M504.00 510.60 C504.50 507.30 507.10 505.45 510.50 505.45 C514.10 505.45 516.60 507.60 516.60 510.80 C516.60 514.00 514.10 516.10 510.10 516.10 C514.70 516.10 517.00 518.80 517.00 522.40 C517.00 526.30 514.10 528.60 510.40 528.60 C506.50 528.60 504.10 527.00 503.80 523.30 M584.95 529.90 V505.45 H596.50 C600.50 505.45 601.95 508.00 601.95 511.00 C601.95 514.20 600.50 516.60 596.50 516.60 H584.95 M594.70 516.60 L603.90 529.10 M620.10 504.00 V529.90 M619.60 505.20 L612.40 513.00 M693.55 529.90 V505.45 H705.10 C709.10 505.45 710.55 508.00 710.55 511.00 C710.55 514.20 709.10 516.60 705.10 516.60 H693.55 M703.30 516.60 L712.50 529.10 M728.05 529.90 V504.60 L716.75 521.60 H732.90 M801.55 529.90 V505.45 H813.10 C817.10 505.45 818.55 508.00 818.55 511.00 C818.55 514.20 817.10 516.60 813.10 516.60 H801.55 M811.30 516.60 L820.50 529.10 M825.80 511.80 C826.00 507.60 828.90 505.45 832.60 505.45 C836.50 505.45 839.40 507.90 839.40 511.40 C839.40 514.60 837.50 516.60 834.90 519.10 L825.90 528.45 H840.90 " stroke="#3a3a3a" stroke-width="2.9" fill="none"/>
<path d="M549.0 170.92861995343856 A64 64 0 1 0 549.0 276.07138004656144 Z" stroke="#3b3b3b" stroke-width="4.5" fill="none" stroke-linejoin="round"/>
<path d="M871.5 170.92861995343856 A64 64 0 1 0 871.5 276.07138004656144 Z" stroke="#3b3b3b" stroke-width="4.5" fill="none" stroke-linejoin="round"/>
<rect x="343" y="271" width="70" height="145" stroke="#3b3b3b" stroke-width="4.5" fill="none"/>
<path d="M633 198H714" stroke="#3b3b3b" stroke-width="4.5"/>
<path d="M633 248.5H714" stroke="#3b3b3b" stroke-width="4.5"/>
<path d="M633 279H714" stroke="#3b3b3b" stroke-width="4.5"/>
<path d="M633 329H714" stroke="#3b3b3b" stroke-width="4.5"/>
<path d="M377.5 309L512.5 189.5 M512.5 189.5L835 189.5 M512.5 223.5L652 304 M512.5 257.5L652 223 M512.5 257.5L512.5 387 M696 223L835 223.5 M696 304L835 257.5 M835 223.5L835 257.5 M835 257.5L835 387 M646 318L625 387.5 M701 318L722.5 387.5" stroke="#a8a87e" stroke-width="1" fill="none"/>
<circle cx="512.5" cy="303" r="6.5" fill="#333"/><rect x="512.0" y="302.5" width="1" height="1" fill="#666"/>
<circle cx="835" cy="303" r="6.5" fill="#333"/><rect x="834.5" y="302.5" width="1" height="1" fill="#666"/>
<circle cx="512.5" cy="189.5" r="14" fill="#c8c8c8"/><circle cx="512.5" cy="189.5" r="10.5" fill="#009090"/>
<circle cx="512.5" cy="223.5" r="14" fill="#c8c8c8"/><circle cx="512.5" cy="223.5" r="10.5" fill="#009090"/>
<rect x="498.5" y="243.5" width="28" height="28" fill="#c8c8c8"/><circle cx="512.5" cy="257.5" r="10.5" fill="#009090"/>
<circle cx="835" cy="189.5" r="14" fill="#c8c8c8"/><circle cx="835" cy="189.5" r="10.5" fill="#009090"/>
<circle cx="835" cy="223.5" r="14" fill="#c8c8c8"/><circle cx="835" cy="223.5" r="10.5" fill="#009090"/>
<rect x="821" y="243.5" width="28" height="28" fill="#c8c8c8"/><circle cx="835" cy="257.5" r="10.5" fill="#009090"/>
<rect x="636" y="209" width="32" height="28" fill="#ff0000"/>
<rect x="681" y="209" width="32" height="28" fill="#ff0000"/>
<rect x="636" y="290" width="32" height="28" fill="#ff0000"/>
<rect x="681" y="290" width="32" height="28" fill="#ff0000"/>
<circle cx="377.5" cy="309.5" r="20" fill="#c4c4c4"/><circle cx="377.5" cy="309.5" r="14" fill="#009494"/>
<text x="377.5" y="309" font-size="12.5" fill="#f0e08c" text-anchor="middle" textLength="8" lengthAdjust="spacingAndGlyphs">2</text><text x="377.5" y="321.5" font-size="12" fill="#f0e08c" text-anchor="middle" textLength="24" lengthAdjust="spacingAndGlyphs">GND</text>
<rect x="355" y="355" width="46" height="46" fill="#8a8a8a"/><rect x="357" y="357" width="42" height="42" fill="#dedede"/><circle cx="377.5" cy="377.5" r="13.5" fill="#7cc4c4"/>
<text x="377.5" y="377" font-size="12.5" fill="#f0e4a0" text-anchor="middle" textLength="6" lengthAdjust="spacingAndGlyphs">1</text><text x="377.5" y="389.5" font-size="12" fill="#f0e4a0" text-anchor="middle" textLength="18" lengthAdjust="spacingAndGlyphs">12V</text>
<rect x="492.0" y="387" width="41" height="36" fill="#ff0000"/>
<text x="512.5" y="403.5" font-size="10" fill="#ffe6e6" text-anchor="middle">1</text><text x="512.5" y="415.2" font-size="10.5" fill="#ffdcdc" text-anchor="middle" textLength="35" lengthAdjust="spacingAndGlyphs">NetC2_1</text>
<rect x="488.0" y="436" width="49" height="44" fill="#7a7a7a"/><rect x="492.0" y="440" width="41" height="36" fill="#ff8080"/>
<rect x="599.5" y="387" width="41" height="36" fill="#ff0000"/>
<text x="620" y="403.5" font-size="10" fill="#ffe6e6" text-anchor="middle">1</text><text x="620" y="415.2" font-size="10.5" fill="#ffdcdc" text-anchor="middle" textLength="35" lengthAdjust="spacingAndGlyphs">NetC1_1</text>
<rect x="595.5" y="436" width="49" height="44" fill="#7a7a7a"/><rect x="599.5" y="440" width="41" height="36" fill="#ff8080"/>
<rect x="707.0" y="387" width="41" height="36" fill="#ff0000"/>
<text x="727.5" y="403.5" font-size="10" fill="#ffe6e6" text-anchor="middle">1</text><text x="727.5" y="415.2" font-size="10.5" fill="#ffdcdc" text-anchor="middle" textLength="35" lengthAdjust="spacingAndGlyphs">NetC1_2</text>
<rect x="703.0" y="436" width="49" height="44" fill="#7a7a7a"/><rect x="707.0" y="440" width="41" height="36" fill="#ff8080"/>
<rect x="814.5" y="387" width="41" height="36" fill="#ff0000"/>
<text x="835" y="403.5" font-size="10" fill="#ffe6e6" text-anchor="middle">1</text><text x="835" y="415.2" font-size="10.5" fill="#ffdcdc" text-anchor="middle" textLength="35" lengthAdjust="spacingAndGlyphs">NetC2_2</text>
<rect x="810.5" y="436" width="49" height="44" fill="#7a7a7a"/><rect x="814.5" y="440" width="41" height="36" fill="#ff8080"/>
<path d="M377.5 377.5L512.5 457.5H835" stroke="#fff" stroke-width="3.2" fill="none" stroke-linejoin="round"/>
<text x="512.5" y="455" font-size="10" fill="#ffe6e6" text-anchor="middle">2</text><text x="512.5" y="468" font-size="10.5" fill="#ffe6e6" text-anchor="middle" textLength="16" lengthAdjust="spacingAndGlyphs">12V</text>
<text x="620" y="455" font-size="10" fill="#ffe6e6" text-anchor="middle">2</text><text x="620" y="468" font-size="10.5" fill="#ffe6e6" text-anchor="middle" textLength="16" lengthAdjust="spacingAndGlyphs">12V</text>
<text x="727.5" y="455" font-size="10" fill="#ffe6e6" text-anchor="middle">2</text><text x="727.5" y="468" font-size="10.5" fill="#ffe6e6" text-anchor="middle" textLength="16" lengthAdjust="spacingAndGlyphs">12V</text>
<text x="835" y="455" font-size="10" fill="#ffe6e6" text-anchor="middle">2</text><text x="835" y="468" font-size="10.5" fill="#ffe6e6" text-anchor="middle" textLength="16" lengthAdjust="spacingAndGlyphs">12V</text>
</svg>
<!-- canvas toolbar -->
<div class="a" style="left:410px;top:31px;width:401px;height:28px;background:#3c3c3c;border-radius:4px"></div>
<svg class="a" style="left:410px;top:31px" width="401" height="28" viewBox="410 31 401 28">
 <!-- filter -->
 <path d="M421 39h13v1.8l-4.6 4.2v5.5h-3.8v-5.5l-4.6-4.2z" fill="#a6d6e6"/><rect x="426.8" y="44.5" width="1.4" height="5.8" fill="#eaf8fc"/><rect x="421.5" y="39" width="12" height="1" fill="#d8f0f8"/>
 <!-- magnet -->
 <path d="M449 40.5l2-1.3v2.6zM449 45l2-1.3v2.6zM449 49.5l2-1.3v2.6z" fill="#a8d0d8"/>
 <path d="M452.5 41.5h6.5a3.5 3.5 0 0 1 3.5 3.5" stroke="#6f9ee8" stroke-width="3" fill="none"/>
 <path d="M462.5 45a3.5 3.5 0 0 1-3.5 3.5h-6.5" stroke="#ec8d94" stroke-width="3" fill="none"/>
 <!-- plus -->
 <path d="M478 44.5h11M483.5 39v11" stroke="#789ee6" stroke-width="1.2"/>
 <path d="M477 44.5l2-1.5v3zM490 44.5l-2-1.5v3zM483.5 38l-1.5 2h3zM483.5 51l-1.5-2h3z" fill="#789ee6"/>
 <!-- dashed rect -->
 <rect x="505.5" y="38.5" width="13" height="13" fill="none" stroke="#7aa2ee" stroke-width="1" stroke-dasharray="2 1.2"/>
 <!-- align -->
 <rect x="534" y="42" width="3" height="6.5" fill="#ec8a90"/><rect x="543" y="42" width="3" height="6.5" fill="#ec8a90"/><rect x="538" y="39" width="3.5" height="9.5" fill="#a6dcf2"/><rect x="538.8" y="40" width="1.2" height="8" fill="#dff4fb"/><rect x="534" y="49" width="12" height="2" fill="#6ea4ea"/>
 <path d="M554.5 37v16" stroke="#1e1e1e" stroke-width="1"/>
 <!-- chip -->
 <rect x="563.5" y="39.5" width="10" height="10" fill="#d4dde3" stroke="#9fc0d0" stroke-width="1"/>
 <path d="M562.5 41h-2M562.5 43.5h-2M562.5 46h-2M562.5 48.5h-2M574.5 41h2M574.5 43.5h2M574.5 46h2M574.5 48.5h2M565 38.5v-2M567.5 38.5v-2M570 38.5v-2M572.5 38.5v-2M565 50.5v2M567.5 50.5v2M570 50.5v2M572.5 50.5v2" stroke="#a6c8d8" stroke-width="0.9"/>
 <!-- route -->
 <path d="M591 50l11-9.5" stroke="#7096d6" stroke-width="1.3"/><path d="M590.5 46v-7h6" stroke="#e8a820" stroke-width="1.3" fill="none"/><path d="M596 36.8l2.6 2.2-2.6 2.2z" fill="#e8a820"/>
 <circle cx="591" cy="50.3" r="2.1" fill="none" stroke="#e8a820" stroke-width="1.2"/><circle cx="601.5" cy="40.5" r="2.1" fill="none" stroke="#e8a820" stroke-width="1.2"/>
 <!-- meander -->
 <path d="M618.5 47v-4.5a2.2 2.2 0 0 1 4.4 0v3a2.2 2.2 0 0 0 4.4 0v-3a2.2 2.2 0 0 1 4.4 0v4.5" stroke="#6a9ce6" stroke-width="1.5" fill="none"/>
 <circle cx="618.5" cy="48.3" r="1.5" fill="none" stroke="#e8a830" stroke-width="1"/><circle cx="631.7" cy="48.3" r="1.5" fill="none" stroke="#e8a830" stroke-width="1"/>
 <!-- key/probe -->
 <circle cx="651" cy="43.5" r="4.8" fill="#f0c020"/><circle cx="651" cy="43.5" r="1.7" fill="#7a5a00"/><rect x="649.5" y="47.5" width="3" height="4" fill="#e88a30"/><rect x="655" y="42.5" width="4" height="2" fill="#44c040"/>
 <!-- layer stack -->
 <path d="M673.5 50.5v-5h5v-4h9.5v9z" fill="#c4e2f2" stroke="#80b0d0" stroke-width="0.8"/>
 <!-- pink box -->
 <rect x="701.5" y="37.5" width="15" height="15" fill="none" stroke="#e070d0" stroke-width="1"/><path d="M705.5 48.5l8-7" stroke="#6a9ce6" stroke-width="1.3"/><circle cx="705" cy="49" r="1.4" fill="none" stroke="#e8a830"/><circle cx="713.5" cy="41" r="1.4" fill="none" stroke="#e8a830"/>
 <!-- dimension -->
 <path d="M730.5 39v12h13.5v-12" stroke="#6a9ce6" stroke-width="1.3" fill="none"/><circle cx="730.5" cy="37.8" r="1.5" fill="none" stroke="#e8a830"/><circle cx="744" cy="37.8" r="1.5" fill="none" stroke="#e8a830"/>
 <text x="737.3" y="49" font-size="8" fill="#a8b8c8" text-anchor="middle" style="font-family:'Liberation Serif'">10</text>
 <!-- A -->
 <text x="765" y="51.5" font-size="17" fill="#5aa0f0" text-anchor="middle" style="font-family:'Liberation Serif'" font-weight="bold">A</text>
 <!-- line -->
 <path d="M786.5 50.5l13-12" stroke="#6aa0ee" stroke-width="1.8"/>
 <!-- corner triangles -->
 <g fill="#a8a8a8">
  <path d="M497 53v5h-5z"/><path d="M525 53v5h-5z"/><path d="M553 53v5h-5z"/><path d="M581 53v5h-5z"/><path d="M609 53v5h-5z"/><path d="M637 53v5h-5z"/><path d="M665 53v5h-5z"/><path d="M693 53v5h-5z"/><path d="M721 53v5h-5z"/><path d="M749 53v5h-5z"/><path d="M805 53v5h-5z"/>
 </g>
</svg>

<!-- layer tab bar -->
<div class="a" style="left:306px;top:657px;width:607px;height:24px;background:#363636"></div>
<div class="a" style="left:312px;top:661px;width:25px;height:13px;background:#ff0000"></div>
<div class="a" style="left:337px;top:661px;width:20px;height:13px;background:#525252;border-radius:0 2px 2px 0"></div>
<div class="a" style="left:341px;top:661px;font-size:11px">LS</div>
<div class="a" style="left:362px;top:659px;width:34px;height:17px;background:#4a4a4a;border:1px solid #2a2a2a;border-radius:3px"></div>
<div class="a" style="left:379px;top:661px;width:1px;height:13px;background:#2a2a2a"></div>
<svg class="a" style="left:367px;top:662px" width="26" height="12"><path d="M8 1v9l-5-4.5z" fill="#777"/><path d="M19 1v9l5-4.5z" fill="#eee"/></svg>
<div class="a" style="left:401px;top:657px;width:97px;height:18px;background:#4b4b4b;border-radius:0 0 3px 3px"></div>
<div class="a" style="left:407px;top:661px;width:10px;height:10px;background:#f00;border:1px solid #999"></div>
<div class="a" style="left:425px;top:660px;font-weight:bold;font-size:11.5px">[1] Top Layer</div>
<div class="a" style="left:498px;top:657px;width:111px;height:18px;background:#393939;border:1px solid #2a2a2a;border-top:none;border-radius:0 0 3px 3px"></div>
<div class="a" style="left:505px;top:661px;width:10px;height:10px;background:#0000ff;border:1px solid #999"></div>
<div class="a" style="left:523px;top:660px">[2] Bottom Layer</div>
<div class="a" style="left:609px;top:657px;width:91px;height:18px;background:#393939;border:1px solid #2a2a2a;border-top:none;border-radius:0 0 3px 3px"></div>
<div class="a" style="left:616px;top:661px;width:10px;height:10px;background:#ffff00;border:1px solid #999"></div>
<div class="a" style="left:634px;top:660px">Top Overlay</div>
<div class="a" style="left:700px;top:657px;width:108px;height:18px;background:#393939;border:1px solid #2a2a2a;border-top:none;border-radius:0 0 3px 3px"></div>
<div class="a" style="left:707px;top:661px;width:10px;height:10px;background:#808000;border:1px solid #999"></div>
<div class="a" style="left:725px;top:660px">Bottom Overlay</div>
<div class="a" style="left:808px;top:657px;width:105px;height:18px;background:#393939;border:1px solid #2a2a2a;border-top:none;border-radius:0 0 3px 3px"></div>
<div class="a" style="left:815px;top:661px;width:10px;height:10px;background:#ff00ff;border:1px solid #999"></div>
<div class="a" style="left:833px;top:660px">Keep-Out Layer</div>
<!-- RIGHT PANEL -->
<div class="a" style="left:916px;top:3px;width:362px;height:23px;background:#4b4b4b"></div>
<div class="a" style="left:921px;top:7px;font-weight:bold;font-size:11.7px;color:#f4f4f4">PCB ActiveRoute</div>
<svg class="a" style="left:1228px;top:6px" width="50" height="16" viewBox="0 0 50 16">
 <path d="M5 6h7l-3.5 5z" fill="#fff"/>
 <path d="M22 4h5v5h1v1.5h-3v2.5h-1.2v-2.5h-2.8v-1.5h1zM23.2 5v4h0.9v-4z" fill="#fff" fill-rule="evenodd"/>
 <path d="M37.5 5.5l6 6M43.5 5.5l-6 6" stroke="#fff" stroke-width="2"/>
</svg>
<div class="a" style="left:916px;top:26px;width:362px;height:652px;background:#3d3d3d"></div>
<!-- scrollbar -->
<svg class="a" style="left:1266px;top:38px" width="10" height="630"><path d="M1 6h7l-3.5-3.5z" fill="#666"/><path d="M1 622h7l-3.5 3.5z" fill="#777"/></svg>
<div class="a" style="left:1267px;top:51px;width:6px;height:375px;background:#787878;border-radius:3px"></div>

<svg class="a" style="left:924px;top:38px" width="6" height="6"><path d="M5 0v5h-5z" fill="#eee"/></svg>
<div class="a" style="left:933px;top:35px;font-weight:bold;font-size:11.2px">Action</div>
<div class="a" style="left:924px;top:53px;width:339px;height:82px;background:#454545;border-radius:3px"></div>
<div class="cb" style="left:931px;top:60px"></div>
<div class="a" style="left:950px;top:62px">Tune Selected</div>
<div class="cb" style="left:931px;top:85px"></div>
<div class="a" style="left:950px;top:86px">Pin Swap Routing</div>
<div class="cb on" style="left:931px;top:109px"></div>
<div class="a" style="left:950px;top:111px">Gloss Results</div>
<div class="btn" style="left:1054px;top:55px;width:203px;height:25px;background:#585858"></div>
<div class="a" style="left:1071px;top:62px">ActiveRoute</div>
<div class="a" style="left:1201px;top:62px">Shift+A</div>
<div class="btn" style="left:1054px;top:104px;width:203px;height:25px;background:#585858"></div>
<div class="a" style="left:1071px;top:111px">Route Guide</div>
<svg class="a" style="left:1141px;top:73px" width="15" height="22"><path d="M1.5 1V17.2l4-3.8 3.2 6.6 2.4-1.1-3.1-6.4h5.6z" fill="#fff" stroke="#111" stroke-width="1" stroke-linejoin="round"/></svg>

<svg class="a" style="left:924px;top:151px" width="6" height="6"><path d="M5 0v5h-5z" fill="#eee"/></svg>
<div class="a" style="left:933px;top:148px;font-weight:bold;font-size:11.2px">Layers</div>
<div class="a" style="left:924px;top:166px;width:339px;height:110px;background:#454545;border-radius:3px"></div>
<div class="cb on" style="left:937px;top:172px"></div>
<div class="a" style="left:957px;top:174px">Show Signal Layers Only</div>
<div class="a" style="left:930px;top:191px;width:327px;height:62px;background:#353535;border:1px solid #262626"></div>
<div class="a" style="left:931px;top:192px;width:325px;height:20px;background:#3e3e3e;border-bottom:1px solid #262626"></div>
<div class="cb" style="left:933px;top:194px"></div>
<div class="sep" style="left:958px;top:196px;height:11px;background:#1e1e1e"></div>
<div class="sep" style="left:986px;top:196px;height:11px;background:#1e1e1e"></div>
<div class="sep" style="left:1094px;top:196px;height:11px;background:#1e1e1e"></div>
<div class="sep" style="left:1126px;top:196px;height:11px;background:#1e1e1e"></div>
<div class="a" style="left:993px;top:196px">Layer</div>
<div class="a" style="left:1107px;top:196px">#</div>
<div class="a" style="left:1133px;top:196px">Type</div>
<div class="a" style="left:931px;top:212px;width:325px;height:19px;background:#5f80a2"></div>
<div class="cb on" style="left:937px;top:214px"></div>
<div class="a" style="left:965px;top:214px;width:16px;height:16px;background:#f00;border:1px solid #222;border-radius:2px"></div>
<div class="a" style="left:997px;top:216px">Top Layer</div>
<div class="a" style="left:1111px;top:216px">1</div>
<div class="a" style="left:1137px;top:216px">Signal</div>
<div class="cb" style="left:937px;top:234px"></div>
<div class="a" style="left:965px;top:234px;width:16px;height:16px;background:#00f;border:1px solid #222;border-radius:2px"></div>
<div class="a" style="left:997px;top:236px">Bottom Layer</div>
<div class="a" style="left:1111px;top:236px">2</div>
<div class="a" style="left:1137px;top:236px">Signal</div>
<div class="a" style="left:930px;top:258px">If no layer checked, Active layer is used.</div>

<svg class="a" style="left:924px;top:292px" width="6" height="6"><path d="M5 0v5h-5z" fill="#eee"/></svg>
<div class="a" style="left:933px;top:289px;font-weight:bold;font-size:11.2px">Control</div>
<div class="a" style="left:924px;top:307px;width:339px;height:135px;background:#454545;border-radius:3px"></div>
<div class="a" style="left:930px;top:314px">Track-Track Space In Route Guide</div>
<div class="a" style="left:930px;top:332px;width:327px;height:1px;background:#2a2a2a"></div>
<div class="a" style="left:930px;top:345px;width:86px;height:21px;background:#2f2f2f;border:1px solid #262626;border-radius:3px"></div>
<div class="a" style="left:936px;top:350px">Rule</div>
<div class="a" style="left:1030px;top:348px;width:227px;height:8px;background:#2c2c2c;border-radius:4px"></div>
<div class="a" style="left:1031px;top:346px;width:4px;height:12px;background:#d0d0d0;border-radius:2px"></div>
<div class="a" style="left:1030px;top:358px;font-size:9.5px;color:#ccc">Rule</div>
<div class="a" style="left:1055px;top:358px;font-size:9.5px;color:#ccc">.100</div>
<div class="a" style="left:1087px;top:358px;font-size:9.5px;color:#ccc">.125</div>
<div class="a" style="left:1118px;top:358px;font-size:9.5px;color:#ccc">.150</div>
<div class="a" style="left:1150px;top:358px;font-size:9.5px;color:#ccc">.175</div>
<div class="a" style="left:1182px;top:358px;font-size:9.5px;color:#ccc">.200</div>
<div class="a" style="left:1213px;top:358px;font-size:9.5px;color:#ccc">.225</div>
<div class="a" style="left:1238px;top:358px;font-size:9.5px;color:#ccc">.250</div>
<div class="a" style="left:930px;top:383px">Meander % Over Manhattan Length</div>
<div class="a" style="left:930px;top:401px;width:327px;height:1px;background:#2a2a2a"></div>
<div class="a" style="left:930px;top:414px;width:86px;height:21px;background:#2f2f2f;border:1px solid #262626;border-radius:3px"></div>
<div class="a" style="left:936px;top:419px">100</div>
<div class="a" style="left:1030px;top:417px;width:227px;height:8px;background:#2c2c2c;border-radius:4px"></div>
<div class="a" style="left:1164px;top:414px;width:4px;height:13px;background:#d0d0d0;border-radius:2px"></div>
<div class="a" style="left:1030px;top:427px;font-size:9.5px;color:#ccc">0</div>
<div class="a" style="left:1071px;top:427px;font-size:9.5px;color:#ccc">30</div>
<div class="a" style="left:1116px;top:427px;font-size:9.5px;color:#ccc">50</div>
<div class="a" style="left:1159px;top:427px;font-size:9.5px;color:#ccc">100</div>
<div class="a" style="left:1203px;top:427px;font-size:9.5px;color:#ccc">150</div>
<div class="a" style="left:1242px;top:427px;font-size:9.5px;color:#ccc">200</div>

<svg class="a" style="left:924px;top:459px" width="6" height="6"><path d="M5 0v5h-5z" fill="#eee"/></svg>
<div class="a" style="left:933px;top:456px;font-weight:bold;font-size:11.2px">Tune</div>
<div class="a" style="left:924px;top:474px;width:339px;height:198px;background:#454545;border-radius:3px"></div>
<div class="a" style="left:930px;top:482px;width:327px;height:21px;background:#434343;border:1px solid #383838;border-radius:2px"></div>
<div class="a" style="left:958px;top:485px;width:1px;height:15px;background:#383838"></div>
<div class="a" style="left:965px;top:487px;color:#888">Match Length Rules for Selected</div>
<div class="a" style="left:930px;top:529px">Single Ended</div>
<div class="a" style="left:930px;top:547px;width:327px;height:1px;background:#2a2a2a"></div>
<svg class="a" style="left:924px;top:563px" width="339" height="109" viewBox="924 563 339 109">
 <defs><pattern id="ck" patternUnits="userSpaceOnUse" x="924" y="563" width="6" height="6"><rect width="6" height="6" fill="#3f3f3f"/><rect width="3" height="3" fill="#4d4d4d"/><rect x="3" y="3" width="3" height="3" fill="#4d4d4d"/></pattern></defs>
 <rect x="924" y="563" width="339" height="109" fill="url(#ck)"/>
 <path d="M1019 608.6H1031L1039.8 600V592L1046 585.6H1059L1065 592V627L1071.5 633.7H1085L1091.7 627V592L1098 585.6H1112L1118.2 592V627L1124.5 633.7H1137.5L1143.7 627V615L1150 608.6H1168" stroke="#e6b81e" stroke-width="5" fill="none"/>
 <g stroke="#64c070" stroke-width="1" fill="none">
  <path d="M1033 608.5H1056M1052.5 593V608M1048.5 604l4 4 4-4"/>
  <path d="M1049 633.5H1076M1052.5 634V650M1048.5 638l4-4 4 4"/>
 </g>
 <g stroke="#6aaad6" stroke-width="1" fill="none">
  <path d="M1091.5 609V654M1076 650.5H1091M1087 646.5l4 4-4 4"/>
  <path d="M1118.5 609V654M1119 650.5H1133M1123 646.5l-4 4 4 4"/>
 </g>
 <text x="997" y="666" font-size="11.5" fill="#c0ccd8" style="font-family:'Liberation Sans'">Max Amplitude</text>
 <text x="1137" y="658" font-size="11.5" fill="#c0ccd8" style="font-family:'Liberation Sans'">Min Space</text>
</svg>
</body></html>
